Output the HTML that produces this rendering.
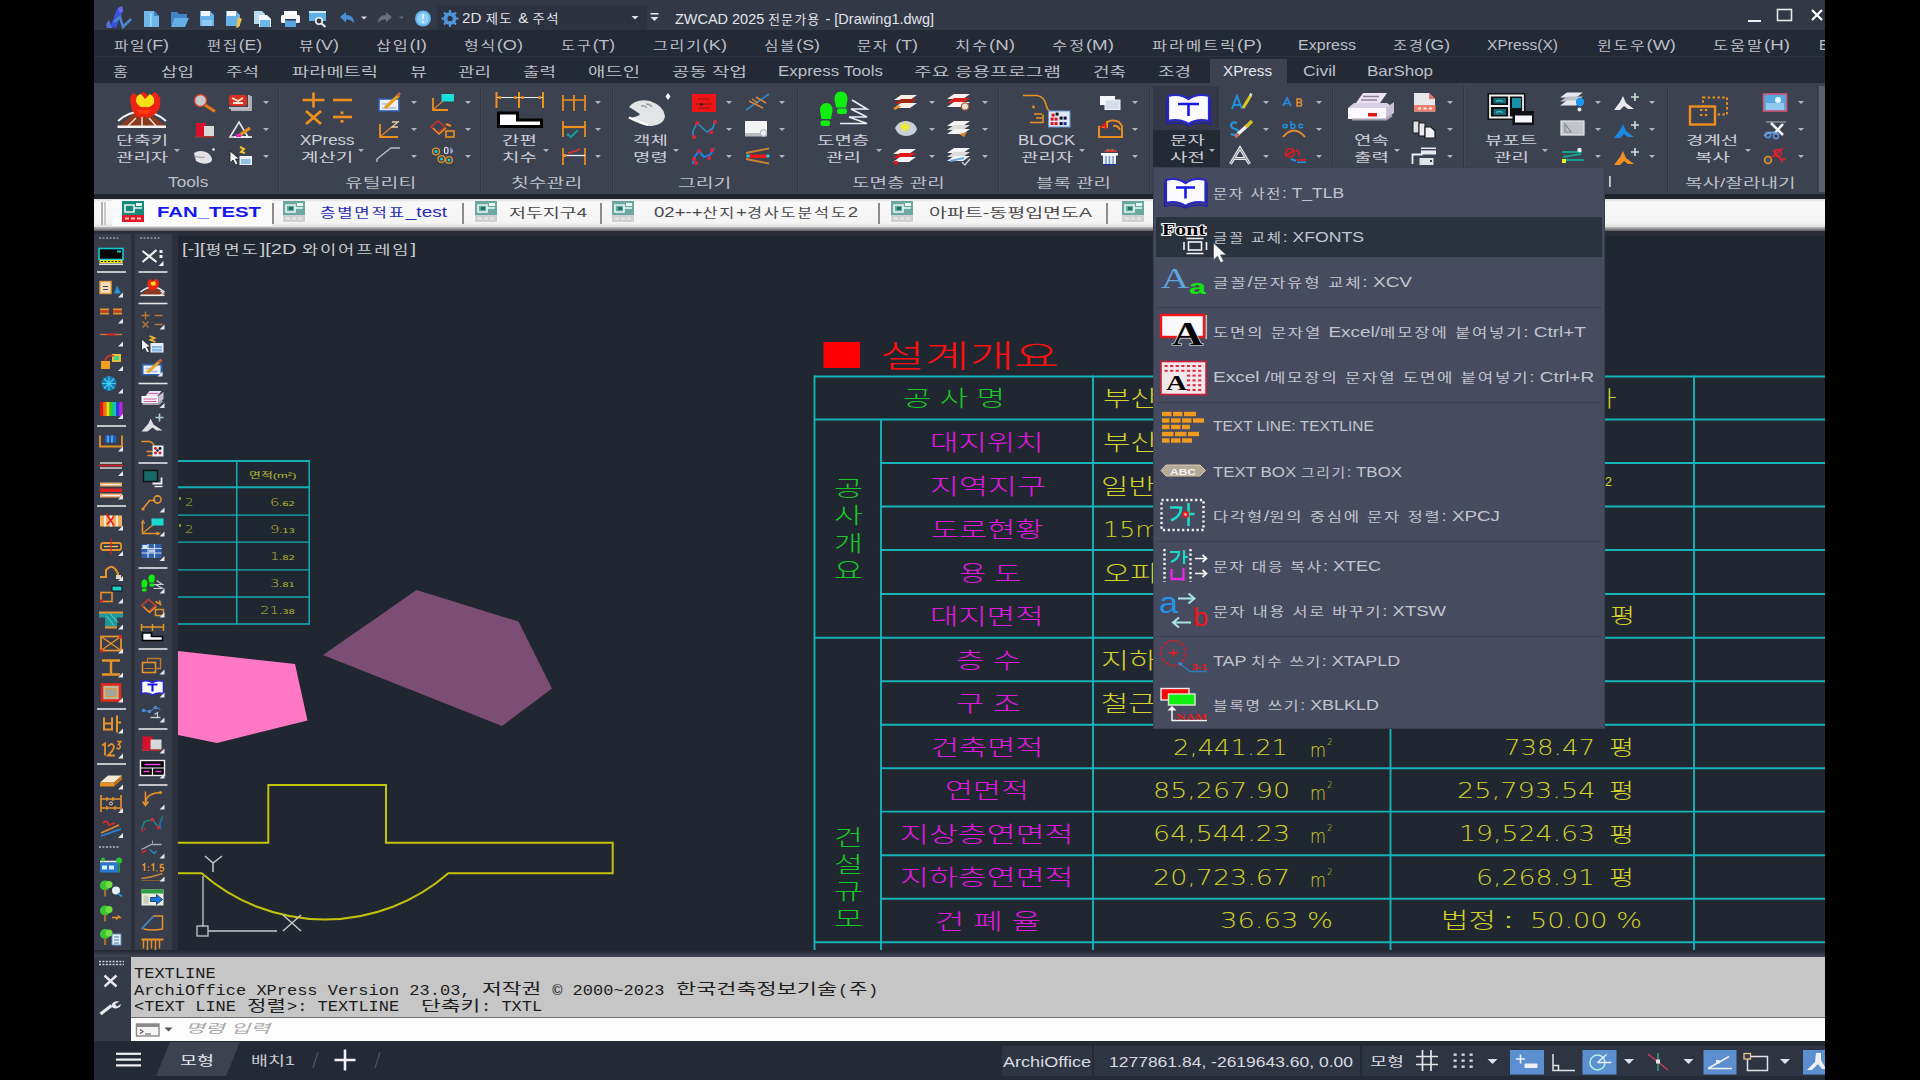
<!DOCTYPE html>
<html lang="ko"><head><meta charset="utf-8"><title>ZWCAD 2025 - Drawing1.dwg</title>
<style>
html,body{margin:0;padding:0;background:#000;}
body{width:1920px;height:1080px;position:relative;overflow:hidden;font-family:"Liberation Sans","Noto Sans CJK KR",sans-serif;}
.b{position:absolute;display:block;}
.t{position:absolute;white-space:pre;transform-origin:0 50%;}
.m{font-family:"Liberation Mono","Noto Sans CJK KR",monospace;}
.n{font-family:"DejaVu Sans","Liberation Sans","Noto Sans CJK KR",sans-serif;}
.s{font-family:"Liberation Serif","Noto Serif CJK SC",serif;}
</style></head>
<body>
<!-- top -->
<div id="top">
<div class="b" style="left:94px;top:0px;width:1731px;height:30px;background:#333846;"></div>
<div class="b" style="left:94px;top:30px;width:1731px;height:53px;background:#232935;"></div>
<div class="b" style="left:94px;top:56px;width:1731px;height:1px;background:#2e3340;"></div>
<div class="b" style="left:437px;top:5px;width:210px;height:25px;background:#2d3140;"></div>
<div class="t" style="left:462.0px;top:8.7px;line-height:19px;font-size:14.31px;color:#e0e2e8;transform:scaleX(1.062);">2D <span style="font-size:88%;letter-spacing:1.35px">제도 </span>&amp; <span style="font-size:88%;letter-spacing:1.35px">주석</span></div>
<div class="t" style="left:675.0px;top:9.7px;line-height:19px;font-size:14.31px;color:#e2e4ea;transform:scaleX(1.012);">ZWCAD 2025 <span style="font-size:88%;letter-spacing:1.35px">전문가용 </span>- [Drawing1.dwg]</div>
<div class="t" style="left:114.0px;top:36.0px;line-height:19px;font-size:14.31px;color:#bcbfc8;transform:scaleX(1.247);"><span style="font-size:88%;letter-spacing:1.35px">파일</span>(F)</div>
<div class="t" style="left:207.0px;top:36.0px;line-height:19px;font-size:14.31px;color:#bcbfc8;transform:scaleX(1.225);"><span style="font-size:88%;letter-spacing:1.35px">편집</span>(E)</div>
<div class="t" style="left:299.0px;top:36.0px;line-height:19px;font-size:14.31px;color:#bcbfc8;transform:scaleX(1.251);"><span style="font-size:88%;letter-spacing:1.35px">뷰</span>(V)</div>
<div class="t" style="left:376.0px;top:36.0px;line-height:19px;font-size:14.31px;color:#bcbfc8;transform:scaleX(1.296);"><span style="font-size:88%;letter-spacing:1.35px">삽입</span>(I)</div>
<div class="t" style="left:464.0px;top:36.0px;line-height:19px;font-size:14.31px;color:#bcbfc8;transform:scaleX(1.269);"><span style="font-size:88%;letter-spacing:1.35px">형식</span>(O)</div>
<div class="t" style="left:561.0px;top:36.0px;line-height:19px;font-size:14.31px;color:#bcbfc8;transform:scaleX(1.224);"><span style="font-size:88%;letter-spacing:1.35px">도구</span>(T)</div>
<div class="t" style="left:653.0px;top:36.0px;line-height:19px;font-size:14.31px;color:#bcbfc8;transform:scaleX(1.280);"><span style="font-size:88%;letter-spacing:1.35px">그리기</span>(K)</div>
<div class="t" style="left:764.0px;top:36.0px;line-height:19px;font-size:14.31px;color:#bcbfc8;transform:scaleX(1.247);"><span style="font-size:88%;letter-spacing:1.35px">심볼</span>(S)</div>
<div class="t" style="left:857.0px;top:36.0px;line-height:19px;font-size:14.31px;color:#bcbfc8;transform:scaleX(1.246);"><span style="font-size:88%;letter-spacing:1.35px">문자 </span>(T)</div>
<div class="t" style="left:955.0px;top:36.0px;line-height:19px;font-size:14.31px;color:#bcbfc8;transform:scaleX(1.313);"><span style="font-size:88%;letter-spacing:1.35px">치수</span>(N)</div>
<div class="t" style="left:1052.0px;top:36.0px;line-height:19px;font-size:14.31px;color:#bcbfc8;transform:scaleX(1.311);"><span style="font-size:88%;letter-spacing:1.35px">수정</span>(M)</div>
<div class="t" style="left:1152.0px;top:36.0px;line-height:19px;font-size:14.31px;color:#bcbfc8;transform:scaleX(1.315);"><span style="font-size:88%;letter-spacing:1.35px">파라메트릭</span>(P)</div>
<div class="t" style="left:1298.0px;top:35.5px;line-height:19px;font-size:14.31px;color:#bcbfc8;transform:scaleX(1.123);">Express</div>
<div class="t" style="left:1393.0px;top:36.0px;line-height:19px;font-size:14.31px;color:#bcbfc8;transform:scaleX(1.226);"><span style="font-size:88%;letter-spacing:1.35px">조경</span>(G)</div>
<div class="t" style="left:1487.0px;top:35.5px;line-height:19px;font-size:14.31px;color:#bcbfc8;transform:scaleX(1.090);">XPress(X)</div>
<div class="t" style="left:1597.0px;top:36.0px;line-height:19px;font-size:14.31px;color:#bcbfc8;transform:scaleX(1.278);"><span style="font-size:88%;letter-spacing:1.35px">윈도우</span>(W)</div>
<div class="t" style="left:1713.0px;top:36.0px;line-height:19px;font-size:14.31px;color:#bcbfc8;transform:scaleX(1.313);"><span style="font-size:88%;letter-spacing:1.35px">도움말</span>(H)</div>
<div class="b" style="left:1817px;top:32px;width:8px;height:24px;overflow:hidden"><div class="t" style="left:2.0px;top:3.5px;line-height:19px;font-size:14.31px;color:#bcbfc8;transform:scaleX(1.047);">E</div>
</div>
<div class="b" style="left:1210px;top:59px;width:77px;height:25px;background:#3d4251;"></div>
<div class="t" style="left:113.0px;top:64.4px;line-height:16px;font-size:12.56px;color:#bcbfc8;transform:scaleX(1.299);">홈</div>
<div class="t" style="left:161.0px;top:64.4px;line-height:16px;font-size:12.56px;color:#bcbfc8;transform:scaleX(1.429);">삽입</div>
<div class="t" style="left:226.0px;top:64.4px;line-height:16px;font-size:12.56px;color:#bcbfc8;transform:scaleX(1.429);">주석</div>
<div class="t" style="left:292.0px;top:64.4px;line-height:16px;font-size:12.56px;color:#bcbfc8;transform:scaleX(1.490);">파라메트릭</div>
<div class="t" style="left:410.0px;top:64.4px;line-height:16px;font-size:12.56px;color:#bcbfc8;transform:scaleX(1.472);">뷰</div>
<div class="t" style="left:458.0px;top:64.4px;line-height:16px;font-size:12.56px;color:#bcbfc8;transform:scaleX(1.429);">관리</div>
<div class="t" style="left:523.0px;top:64.4px;line-height:16px;font-size:12.56px;color:#bcbfc8;transform:scaleX(1.429);">출력</div>
<div class="t" style="left:588.0px;top:64.4px;line-height:16px;font-size:12.56px;color:#bcbfc8;transform:scaleX(1.501);">애드인</div>
<div class="t" style="left:672.0px;top:64.4px;line-height:16px;font-size:12.56px;color:#bcbfc8;transform:scaleX(1.510);">공동 작업</div>
<div class="t" style="left:778.0px;top:62.0px;line-height:19px;font-size:14.31px;color:#bcbfc8;transform:scaleX(1.183);">Express Tools</div>
<div class="t" style="left:914.0px;top:64.4px;line-height:16px;font-size:12.56px;color:#bcbfc8;transform:scaleX(1.534);">주요 응용프로그램</div>
<div class="t" style="left:1093.0px;top:64.4px;line-height:16px;font-size:12.56px;color:#bcbfc8;transform:scaleX(1.429);">건축</div>
<div class="t" style="left:1158.0px;top:64.4px;line-height:16px;font-size:12.56px;color:#bcbfc8;transform:scaleX(1.429);">조경</div>
<div class="t" style="left:1223.0px;top:62.0px;line-height:19px;font-size:14.31px;color:#e6e8ee;transform:scaleX(1.063);">XPress</div>
<div class="t" style="left:1303.0px;top:62.0px;line-height:19px;font-size:14.31px;color:#bcbfc8;transform:scaleX(1.222);">Civil</div>
<div class="t" style="left:1367.0px;top:62.0px;line-height:19px;font-size:14.31px;color:#bcbfc8;transform:scaleX(1.186);">BarShop</div>
<svg class="b" style="left:94px;top:0px" width="1731" height="30" viewBox="94 0 1731 30"><path d="M110 27 L117 9 L121 7 L123 11 L116 28 Z" fill="#3b52d8" /><path d="M118 8 l4 -2 l1.5 5 l-4 2 z" fill="#6a6af0" /><path d="M106 24 l3 -4 l3 8 l-5 0 z" fill="#5570e0" /><path d="M114 22 L120 17 L123 27 L131 19" fill="none" stroke="#4a86c8" stroke-width="2.6" /><path d="M144 11 h10 l5 5 v11 h-15 z" fill="#6db7ea" /><path d="M154 11 l5 5 h-5 z" fill="#3d83c4" /><rect x="150" y="13" width="1.5" height="14" fill="#a8d8f8" /><path d="M171 12 h6 l2 2 h8 v4 h-13 l-3 8 z" fill="#3f86c8" /><path d="M174 18 h15 l-4 9 h-14 z" fill="#62aee6" /><path d="M200 11 h10 l4 4 v11 h-14 z" fill="#66b2e8" /><rect x="201" y="11" width="9" height="5" fill="#f2f6fa" /><rect x="202" y="20" width="10" height="6" fill="#8ccaf0" /><path d="M226 11 h10 l4 4 v11 h-14 z" fill="#66b2e8" /><rect x="227" y="11" width="9" height="5" fill="#f2f6fa" /><path d="M238 17 l4 2 l-3 8 l-3 1 z" fill="#e8c24a" /><path d="M254 11 h8 l3 3 v10 h-11 z" fill="#b9d9f0" /><path d="M259 15 h8 l4 4 v8 h-12 z" fill="#f0f6fb" /><rect x="260" y="20" width="10" height="7" fill="#6db7ea" /><rect x="284" y="11" width="13" height="5" fill="#ffffff" /><rect x="281" y="15" width="19" height="8" fill="#f4f4f4" rx="1.5"/><rect x="285" y="20" width="11" height="7" fill="#58a6e0" /><rect x="285" y="19" width="11" height="1.5" fill="#333846" /><rect x="309" y="11" width="17" height="10" fill="#5fb0e6" /><rect x="309" y="11" width="17" height="2" fill="#cfe6f6" /><circle cx="319" cy="21" r="3.2" fill="#333846" stroke="#f0f0f0" stroke-width="1.6"/><path d="M321.5 23.5 l4 3.5" fill="none" stroke="#f0f0f0" stroke-width="2" /><path d="M340 17 l6 -5 v3 q8 0 8 8 q-3 -4 -8 -3.5 v3 z" fill="#4a8fd6" /><path d="M361 16.5 h6 l-3 3 z" fill="#d8dae0"/><path d="M392 17 l-6 -5 v3 q-8 0 -8 8 q3 -4 8 -3.5 v3 z" fill="#6a6f7c" /><path d="M399.0 16.5 h5.0 l-2.5 2.5 z" fill="#6a6f7c"/><circle cx="423" cy="18.5" r="8" fill="#62b4ea"/><circle cx="423" cy="18.5" r="6" fill="#8fd0f6"/><rect x="422.3" y="14" width="1.6" height="5" fill="#e8f6ff" /><rect x="422.3" y="21" width="1.6" height="1.8" fill="#e8f6ff" /><circle cx="450" cy="18.5" r="5" fill="none" stroke="#4f96dc" stroke-width="3"/><path d="M450 10 v17 M441.5 18.5 h17 M444 12.5 l12 12 M456 12.5 l-12 12" fill="none" stroke="#4f96dc" stroke-width="2.2" /><circle cx="450" cy="18.5" r="2.6" fill="#2d3140"/><path d="M631.5 16 h7.0 l-3.5 3.5 z" fill="#e0e2e8"/><rect x="650.5" y="13" width="8" height="1.6" fill="#e0e2e8" /><path d="M650.5 17 h8 l-4 4 z" fill="#e0e2e8"/><rect x="1748" y="20" width="13" height="2" fill="#f0f0f0" /><rect x="1777.5" y="9.5" width="14" height="11" fill="none" stroke="#e8e8e8" stroke-width="1.6"/><path d="M1812 10 l10 10 M1822 10 l-10 10" fill="none" stroke="#ffffff" stroke-width="2.2" /></svg>
</div>
<!-- ribbon -->
<div id="ribbon">
<div class="b" style="left:94px;top:83px;width:1731px;height:111px;background:#3d4251;"></div>
<div class="b" style="left:94px;top:194px;width:1731px;height:5px;background:#1f242e;"></div>
<div class="b" style="left:278px;top:86px;width:1px;height:106px;background:#333745;"></div>
<div class="b" style="left:279px;top:86px;width:1px;height:106px;background:#454a5a;"></div>
<div class="b" style="left:480px;top:86px;width:1px;height:106px;background:#333745;"></div>
<div class="b" style="left:481px;top:86px;width:1px;height:106px;background:#454a5a;"></div>
<div class="b" style="left:612px;top:86px;width:1px;height:106px;background:#333745;"></div>
<div class="b" style="left:613px;top:86px;width:1px;height:106px;background:#454a5a;"></div>
<div class="b" style="left:797px;top:86px;width:1px;height:106px;background:#333745;"></div>
<div class="b" style="left:798px;top:86px;width:1px;height:106px;background:#454a5a;"></div>
<div class="b" style="left:998px;top:86px;width:1px;height:106px;background:#333745;"></div>
<div class="b" style="left:999px;top:86px;width:1px;height:106px;background:#454a5a;"></div>
<div class="b" style="left:1149px;top:86px;width:1px;height:106px;background:#333745;"></div>
<div class="b" style="left:1150px;top:86px;width:1px;height:106px;background:#454a5a;"></div>
<div class="b" style="left:1332px;top:86px;width:1px;height:106px;background:#333745;"></div>
<div class="b" style="left:1333px;top:86px;width:1px;height:106px;background:#454a5a;"></div>
<div class="b" style="left:1463px;top:86px;width:1px;height:106px;background:#333745;"></div>
<div class="b" style="left:1464px;top:86px;width:1px;height:106px;background:#454a5a;"></div>
<div class="b" style="left:1667px;top:86px;width:1px;height:106px;background:#333745;"></div>
<div class="b" style="left:1668px;top:86px;width:1px;height:106px;background:#454a5a;"></div>
<div class="b" style="left:1817px;top:86px;width:1px;height:106px;background:#333745;"></div>
<div class="b" style="left:1818px;top:86px;width:1px;height:106px;background:#454a5a;"></div>
<div class="b" style="left:1819px;top:86px;width:6px;height:106px;background:#5a5f6e;"></div>
<div class="b" style="left:1153px;top:86px;width:66px;height:44px;background:#353947;"></div>
<div class="b" style="left:1152.5px;top:130px;width:67.5px;height:38.5px;background:#242a33;"></div>
<div class="t" style="left:115.9px;top:132.9px;line-height:16px;font-size:12.28px;color:#cdd0d8;transform:scaleX(1.541);">단축키</div>
<div class="t" style="left:115.9px;top:149.6px;line-height:16px;font-size:12.28px;color:#cdd0d8;transform:scaleX(1.541);">관리자</div>
<div class="b" style="left:173.5px;top:148.5px;width:0;height:0;border-left:3px solid transparent;border-right:3px solid transparent;border-top:3px solid #b0b3bc"></div>
<div class="t" style="left:299.8px;top:131.0px;line-height:18px;font-size:13.99px;color:#cdd0d8;transform:scaleX(1.207);">XPress</div>
<div class="t" style="left:300.9px;top:149.6px;line-height:16px;font-size:12.28px;color:#cdd0d8;transform:scaleX(1.541);">계산기</div>
<div class="b" style="left:358px;top:148.5px;width:0;height:0;border-left:3px solid transparent;border-right:3px solid transparent;border-top:3px solid #b0b3bc"></div>
<div class="t" style="left:501.6px;top:132.9px;line-height:16px;font-size:12.28px;color:#cdd0d8;transform:scaleX(1.541);">간편</div>
<div class="t" style="left:501.6px;top:149.6px;line-height:16px;font-size:12.28px;color:#cdd0d8;transform:scaleX(1.541);">치수</div>
<div class="b" style="left:542.5px;top:148.5px;width:0;height:0;border-left:3px solid transparent;border-right:3px solid transparent;border-top:3px solid #b0b3bc"></div>
<div class="t" style="left:632.6px;top:132.9px;line-height:16px;font-size:12.28px;color:#cdd0d8;transform:scaleX(1.541);">객체</div>
<div class="t" style="left:632.6px;top:149.6px;line-height:16px;font-size:12.28px;color:#cdd0d8;transform:scaleX(1.541);">명령</div>
<div class="b" style="left:672.5px;top:148.5px;width:0;height:0;border-left:3px solid transparent;border-right:3px solid transparent;border-top:3px solid #b0b3bc"></div>
<div class="t" style="left:816.9px;top:132.9px;line-height:16px;font-size:12.28px;color:#cdd0d8;transform:scaleX(1.541);">도면층</div>
<div class="t" style="left:825.6px;top:149.6px;line-height:16px;font-size:12.28px;color:#cdd0d8;transform:scaleX(1.541);">관리</div>
<div class="b" style="left:875.5px;top:148.5px;width:0;height:0;border-left:3px solid transparent;border-right:3px solid transparent;border-top:3px solid #b0b3bc"></div>
<div class="t" style="left:1018.4px;top:131.0px;line-height:18px;font-size:13.99px;color:#cdd0d8;transform:scaleX(1.207);">BLOCK</div>
<div class="t" style="left:1020.9px;top:149.6px;line-height:16px;font-size:12.28px;color:#cdd0d8;transform:scaleX(1.541);">관리자</div>
<div class="b" style="left:1079px;top:148.5px;width:0;height:0;border-left:3px solid transparent;border-right:3px solid transparent;border-top:3px solid #b0b3bc"></div>
<div class="t" style="left:1169.6px;top:132.9px;line-height:16px;font-size:12.28px;color:#cdd0d8;transform:scaleX(1.541);">문자</div>
<div class="t" style="left:1169.6px;top:149.6px;line-height:16px;font-size:12.28px;color:#cdd0d8;transform:scaleX(1.541);">사전</div>
<div class="b" style="left:1209px;top:148.5px;width:0;height:0;border-left:3px solid transparent;border-right:3px solid transparent;border-top:3px solid #b0b3bc"></div>
<div class="t" style="left:1353.6px;top:132.9px;line-height:16px;font-size:12.28px;color:#cdd0d8;transform:scaleX(1.541);">연속</div>
<div class="t" style="left:1353.6px;top:149.6px;line-height:16px;font-size:12.28px;color:#cdd0d8;transform:scaleX(1.541);">출력</div>
<div class="b" style="left:1394px;top:148.5px;width:0;height:0;border-left:3px solid transparent;border-right:3px solid transparent;border-top:3px solid #b0b3bc"></div>
<div class="t" style="left:1484.9px;top:132.9px;line-height:16px;font-size:12.28px;color:#cdd0d8;transform:scaleX(1.541);">뷰포트</div>
<div class="t" style="left:1493.6px;top:149.6px;line-height:16px;font-size:12.28px;color:#cdd0d8;transform:scaleX(1.541);">관리</div>
<div class="b" style="left:1542px;top:148.5px;width:0;height:0;border-left:3px solid transparent;border-right:3px solid transparent;border-top:3px solid #b0b3bc"></div>
<div class="t" style="left:1685.9px;top:132.9px;line-height:16px;font-size:12.28px;color:#cdd0d8;transform:scaleX(1.541);">경계선</div>
<div class="t" style="left:1694.6px;top:149.6px;line-height:16px;font-size:12.28px;color:#cdd0d8;transform:scaleX(1.541);">복사</div>
<div class="b" style="left:1744.5px;top:148.5px;width:0;height:0;border-left:3px solid transparent;border-right:3px solid transparent;border-top:3px solid #b0b3bc"></div>
<div class="t" style="left:167.8px;top:172.5px;line-height:19px;font-size:14.31px;color:#bcc0c8;transform:scaleX(1.209);">Tools</div>
<div class="t" style="left:345.4px;top:174.9px;line-height:16px;font-size:12.56px;color:#bcc0c8;transform:scaleX(1.542);">유틸리티</div>
<div class="t" style="left:511.4px;top:174.9px;line-height:16px;font-size:12.56px;color:#bcc0c8;transform:scaleX(1.542);">칫수관리</div>
<div class="t" style="left:678.3px;top:174.9px;line-height:16px;font-size:12.56px;color:#bcc0c8;transform:scaleX(1.542);">그리기</div>
<div class="t" style="left:851.6px;top:174.9px;line-height:16px;font-size:12.56px;color:#bcc0c8;transform:scaleX(1.515);">도면층 관리</div>
<div class="t" style="left:1035.5px;top:174.9px;line-height:16px;font-size:12.56px;color:#bcc0c8;transform:scaleX(1.509);">블록 관리</div>
<div class="t" style="left:1684.7px;top:174.9px;line-height:16px;font-size:12.56px;color:#bcc0c8;transform:scaleX(1.519);">복사/잘라내기</div>
<div class="b" style="left:262.5px;top:100.5px;width:0;height:0;border-left:3.5px solid transparent;border-right:3.5px solid transparent;border-top:3.5px solid #b4b7c0"></div>
<div class="b" style="left:262.5px;top:127.5px;width:0;height:0;border-left:3.5px solid transparent;border-right:3.5px solid transparent;border-top:3.5px solid #b4b7c0"></div>
<div class="b" style="left:262.5px;top:154.5px;width:0;height:0;border-left:3.5px solid transparent;border-right:3.5px solid transparent;border-top:3.5px solid #b4b7c0"></div>
<div class="b" style="left:410.5px;top:100.5px;width:0;height:0;border-left:3.5px solid transparent;border-right:3.5px solid transparent;border-top:3.5px solid #b4b7c0"></div>
<div class="b" style="left:410.5px;top:127.5px;width:0;height:0;border-left:3.5px solid transparent;border-right:3.5px solid transparent;border-top:3.5px solid #b4b7c0"></div>
<div class="b" style="left:410.5px;top:154.5px;width:0;height:0;border-left:3.5px solid transparent;border-right:3.5px solid transparent;border-top:3.5px solid #b4b7c0"></div>
<div class="b" style="left:464.5px;top:100.5px;width:0;height:0;border-left:3.5px solid transparent;border-right:3.5px solid transparent;border-top:3.5px solid #b4b7c0"></div>
<div class="b" style="left:464.5px;top:127.5px;width:0;height:0;border-left:3.5px solid transparent;border-right:3.5px solid transparent;border-top:3.5px solid #b4b7c0"></div>
<div class="b" style="left:464.5px;top:154.5px;width:0;height:0;border-left:3.5px solid transparent;border-right:3.5px solid transparent;border-top:3.5px solid #b4b7c0"></div>
<div class="b" style="left:594.5px;top:100.5px;width:0;height:0;border-left:3.5px solid transparent;border-right:3.5px solid transparent;border-top:3.5px solid #b4b7c0"></div>
<div class="b" style="left:594.5px;top:127.5px;width:0;height:0;border-left:3.5px solid transparent;border-right:3.5px solid transparent;border-top:3.5px solid #b4b7c0"></div>
<div class="b" style="left:594.5px;top:154.5px;width:0;height:0;border-left:3.5px solid transparent;border-right:3.5px solid transparent;border-top:3.5px solid #b4b7c0"></div>
<div class="b" style="left:725.5px;top:100.5px;width:0;height:0;border-left:3.5px solid transparent;border-right:3.5px solid transparent;border-top:3.5px solid #b4b7c0"></div>
<div class="b" style="left:725.5px;top:127.5px;width:0;height:0;border-left:3.5px solid transparent;border-right:3.5px solid transparent;border-top:3.5px solid #b4b7c0"></div>
<div class="b" style="left:725.5px;top:154.5px;width:0;height:0;border-left:3.5px solid transparent;border-right:3.5px solid transparent;border-top:3.5px solid #b4b7c0"></div>
<div class="b" style="left:778.5px;top:100.5px;width:0;height:0;border-left:3.5px solid transparent;border-right:3.5px solid transparent;border-top:3.5px solid #b4b7c0"></div>
<div class="b" style="left:778.5px;top:127.5px;width:0;height:0;border-left:3.5px solid transparent;border-right:3.5px solid transparent;border-top:3.5px solid #b4b7c0"></div>
<div class="b" style="left:778.5px;top:154.5px;width:0;height:0;border-left:3.5px solid transparent;border-right:3.5px solid transparent;border-top:3.5px solid #b4b7c0"></div>
<div class="b" style="left:928.5px;top:100.5px;width:0;height:0;border-left:3.5px solid transparent;border-right:3.5px solid transparent;border-top:3.5px solid #b4b7c0"></div>
<div class="b" style="left:928.5px;top:127.5px;width:0;height:0;border-left:3.5px solid transparent;border-right:3.5px solid transparent;border-top:3.5px solid #b4b7c0"></div>
<div class="b" style="left:928.5px;top:154.5px;width:0;height:0;border-left:3.5px solid transparent;border-right:3.5px solid transparent;border-top:3.5px solid #b4b7c0"></div>
<div class="b" style="left:981.5px;top:100.5px;width:0;height:0;border-left:3.5px solid transparent;border-right:3.5px solid transparent;border-top:3.5px solid #b4b7c0"></div>
<div class="b" style="left:981.5px;top:127.5px;width:0;height:0;border-left:3.5px solid transparent;border-right:3.5px solid transparent;border-top:3.5px solid #b4b7c0"></div>
<div class="b" style="left:981.5px;top:154.5px;width:0;height:0;border-left:3.5px solid transparent;border-right:3.5px solid transparent;border-top:3.5px solid #b4b7c0"></div>
<div class="b" style="left:1131.5px;top:100.5px;width:0;height:0;border-left:3.5px solid transparent;border-right:3.5px solid transparent;border-top:3.5px solid #b4b7c0"></div>
<div class="b" style="left:1131.5px;top:127.5px;width:0;height:0;border-left:3.5px solid transparent;border-right:3.5px solid transparent;border-top:3.5px solid #b4b7c0"></div>
<div class="b" style="left:1131.5px;top:154.5px;width:0;height:0;border-left:3.5px solid transparent;border-right:3.5px solid transparent;border-top:3.5px solid #b4b7c0"></div>
<div class="b" style="left:1262.5px;top:100.5px;width:0;height:0;border-left:3.5px solid transparent;border-right:3.5px solid transparent;border-top:3.5px solid #b4b7c0"></div>
<div class="b" style="left:1262.5px;top:127.5px;width:0;height:0;border-left:3.5px solid transparent;border-right:3.5px solid transparent;border-top:3.5px solid #b4b7c0"></div>
<div class="b" style="left:1262.5px;top:154.5px;width:0;height:0;border-left:3.5px solid transparent;border-right:3.5px solid transparent;border-top:3.5px solid #b4b7c0"></div>
<div class="b" style="left:1315.5px;top:100.5px;width:0;height:0;border-left:3.5px solid transparent;border-right:3.5px solid transparent;border-top:3.5px solid #b4b7c0"></div>
<div class="b" style="left:1315.5px;top:127.5px;width:0;height:0;border-left:3.5px solid transparent;border-right:3.5px solid transparent;border-top:3.5px solid #b4b7c0"></div>
<div class="b" style="left:1315.5px;top:154.5px;width:0;height:0;border-left:3.5px solid transparent;border-right:3.5px solid transparent;border-top:3.5px solid #b4b7c0"></div>
<div class="b" style="left:1446.5px;top:100.5px;width:0;height:0;border-left:3.5px solid transparent;border-right:3.5px solid transparent;border-top:3.5px solid #b4b7c0"></div>
<div class="b" style="left:1446.5px;top:127.5px;width:0;height:0;border-left:3.5px solid transparent;border-right:3.5px solid transparent;border-top:3.5px solid #b4b7c0"></div>
<div class="b" style="left:1446.5px;top:154.5px;width:0;height:0;border-left:3.5px solid transparent;border-right:3.5px solid transparent;border-top:3.5px solid #b4b7c0"></div>
<div class="b" style="left:1594.5px;top:100.5px;width:0;height:0;border-left:3.5px solid transparent;border-right:3.5px solid transparent;border-top:3.5px solid #b4b7c0"></div>
<div class="b" style="left:1594.5px;top:127.5px;width:0;height:0;border-left:3.5px solid transparent;border-right:3.5px solid transparent;border-top:3.5px solid #b4b7c0"></div>
<div class="b" style="left:1594.5px;top:154.5px;width:0;height:0;border-left:3.5px solid transparent;border-right:3.5px solid transparent;border-top:3.5px solid #b4b7c0"></div>
<div class="b" style="left:1648.5px;top:100.5px;width:0;height:0;border-left:3.5px solid transparent;border-right:3.5px solid transparent;border-top:3.5px solid #b4b7c0"></div>
<div class="b" style="left:1648.5px;top:127.5px;width:0;height:0;border-left:3.5px solid transparent;border-right:3.5px solid transparent;border-top:3.5px solid #b4b7c0"></div>
<div class="b" style="left:1648.5px;top:154.5px;width:0;height:0;border-left:3.5px solid transparent;border-right:3.5px solid transparent;border-top:3.5px solid #b4b7c0"></div>
<div class="b" style="left:1797.5px;top:100.5px;width:0;height:0;border-left:3.5px solid transparent;border-right:3.5px solid transparent;border-top:3.5px solid #b4b7c0"></div>
<div class="b" style="left:1797.5px;top:127.5px;width:0;height:0;border-left:3.5px solid transparent;border-right:3.5px solid transparent;border-top:3.5px solid #b4b7c0"></div>
<div class="b" style="left:1797.5px;top:154.5px;width:0;height:0;border-left:3.5px solid transparent;border-right:3.5px solid transparent;border-top:3.5px solid #b4b7c0"></div>
<svg class="b" style="left:94px;top:83px" width="1731" height="111" viewBox="94 83 1731 111"><path d="M118 127 L134 113 Q142 108 150 113 L166 127 Z" fill="#8c3a1e" /><path d="M118 121 Q128 112 142 111 Q156 112 166 121" fill="none" stroke="#f4f4f6" stroke-width="2" /><path d="M128 126 l8 -8 M142 126 v-9 M156 126 l-7 -8" fill="none" stroke="#e8d8d0" stroke-width="1.6" /><rect x="117.5" y="125.5" width="48.5" height="2.5" fill="#f4f4f6" /><path d="M131 104 Q128 96 134 93 L139 97 L143 91.5 L149 96 L155 92 Q162 96 160 106 Q158 114 150 117 L138 117 Q131 112 131 104 Z" fill="#ee2412" /><path d="M136 101 Q136 95 141 94 L145 99 L150 94 Q155 97 154 103 Q151 108 145 107 Q138 108 136 101 Z" fill="#f6e018" /><path d="M137 110 h14 l-3 4 h-8 z" fill="#ff3a10" /><path d="M205 105 L215 111.5" fill="none" stroke="#e87818" stroke-width="3" /><circle cx="200.5" cy="100.5" r="6" fill="#c8c8cc" stroke="#d04030" stroke-width="1.4"/><path d="M231 110 h20 v-14" fill="none" stroke="#d8d8dc" stroke-width="1.4" /><path d="M229 108 h20 v-13" fill="none" stroke="#e8e8ec" stroke-width="1.4" /><rect x="229" y="95" width="18" height="11" fill="#d83020" rx="3"/><path d="M232 98 l6 3 l5 -3 M233 103 h10" fill="none" stroke="#f8e8d8" stroke-width="1.8" /><rect x="196" y="123" width="10" height="13" fill="#d8102c" /><rect x="204" y="126" width="10" height="10" fill="#d8d8d8" /><rect x="195" y="136" width="19" height="1.5" fill="#b03030" /><path d="M230 137 L239 122 L248 137 Z" fill="none" stroke="#e8e8e8" stroke-width="1.6" /><path d="M234 137 h18" fill="none" stroke="#f4f4f4" stroke-width="1.6" /><path d="M240 135 L250 128" fill="none" stroke="#e89020" stroke-width="3" /><rect x="236" y="134" width="5" height="3" fill="#f020d0" /><path d="M194 153 Q200 149 208 153 Q214 158 211 162 Q204 166 196 161 Z" fill="#e4e4e6" /><path d="M194 156 Q200 158 205 157" fill="none" stroke="#9a9aa0" stroke-width="1.2" /><circle cx="213.5" cy="149.5" r="1.3" fill="#f4f4f6"/><path d="M230 151 l0 12 l3 -3 l2.5 5 l2.5 -1.5 l-2.5 -4.5 h4 z" fill="#f4f4f6" stroke="#202020" stroke-width="0.8" /><path d="M240 147 l4 2 l-3 3 l4 1" fill="none" stroke="#f0c020" stroke-width="2" /><rect x="239.5" y="156" width="12.5" height="9" fill="#e8eef8" /><rect x="241" y="159" width="9.5" height="5" fill="#90c0e8" /><path d="M302.5 100 h22 M313.5 92.5 v15" fill="none" stroke="#f0901c" stroke-width="2.6" /><path d="M333 100 h19" fill="none" stroke="#f0901c" stroke-width="2.6" /><path d="M306 111 l15 13 M321 111 l-15 13" fill="none" stroke="#f0901c" stroke-width="2.8" /><path d="M333 117 h19" fill="none" stroke="#f0901c" stroke-width="2.6" /><rect x="340.5" y="111.5" width="3" height="2.6" fill="#f0901c" /><rect x="340.5" y="120" width="3" height="2.6" fill="#f0901c" /><rect x="379" y="99" width="20" height="12" fill="#f0f0f4" stroke="#2c5cb0" stroke-width="1.6"/><path d="M382 108 h14 M382 104 h6" fill="none" stroke="#a8c0e0" stroke-width="1.6" /><path d="M385 108 L399 95" fill="none" stroke="#e8a020" stroke-width="3.2" /><path d="M397 96 l3 -3" fill="none" stroke="#c06040" stroke-width="3" /><path d="M380 124 v13 h18" fill="none" stroke="#f0901c" stroke-width="1.8" /><path d="M381 136 l12 -10" fill="none" stroke="#d88030" stroke-width="1.4" /><path d="M392 122 h6 l-6 5 h6" fill="none" stroke="#e8d0a0" stroke-width="1.3" /><path d="M377 162 v-3 L391 148 H400" fill="none" stroke="#b8bcc4" stroke-width="1.5" /><path d="M433 98 v12 h15" fill="none" stroke="#f0901c" stroke-width="1.8" /><path d="M434 109 l9 -8" fill="none" stroke="#d88030" stroke-width="1.4" /><rect x="441.5" y="94" width="12.5" height="7.5" fill="#18e0d8" /><path d="M431 127 l7 -6 l7 6 l-7 6 z" fill="none" stroke="#d03030" stroke-width="1.6" /><path d="M433 128 l6 6 l7 -6" fill="none" stroke="#f0901c" stroke-width="1.4" /><rect x="446" y="131" width="8" height="6" fill="none" stroke="#f0901c" stroke-width="1.6"/><path d="M446 124 l5 2" fill="none" stroke="#f0901c" stroke-width="2" /><circle cx="436" cy="151.5" r="3.4" fill="none" stroke="#d89030" stroke-width="1.4"/><circle cx="436" cy="151.5" r="1.5" fill="#18d0d0"/><circle cx="441.5" cy="159" r="3.4" fill="none" stroke="#d89030" stroke-width="1.4"/><circle cx="441.5" cy="159" r="1.5" fill="#18d0d0"/><circle cx="449" cy="160" r="3.4" fill="none" stroke="#d89030" stroke-width="1.4"/><circle cx="449" cy="160" r="1.5" fill="#18d0d0"/><rect x="444.5" y="147.5" width="3.5" height="6" fill="none" stroke="#e8e8f8" stroke-width="1.2" rx="1.5"/><path d="M451 153.5 v-6 M451 153 q3 -3 0 -3.5" fill="none" stroke="#a0a8f0" stroke-width="1.2" /><path d="M496.5 92 v16 M519 92 v16 M543 92 v16" fill="none" stroke="#f0901c" stroke-width="2" /><path d="M497 97.5 h46" fill="none" stroke="#f0f0f0" stroke-width="1.2" /><circle cx="500" cy="97.5" r="1.6" fill="#f0901c"/><circle cx="515.5" cy="97.5" r="1.6" fill="#f0901c"/><circle cx="522.5" cy="97.5" r="1.6" fill="#f0901c"/><circle cx="539.5" cy="97.5" r="1.6" fill="#f0901c"/><path d="M498.5 113 h19 v7 h24 v6.5 h-43 z" fill="#fdfdff" stroke="#000000" stroke-width="3" /><path d="M563 95 v16 M574 95 v16 M585 95 v16 M563 100 h22" fill="none" stroke="#f0901c" stroke-width="1.7" /><path d="M563 121 v16 M585 121 v16" fill="none" stroke="#f0901c" stroke-width="1.7" /><path d="M563 127 h22" fill="none" stroke="#f0901c" stroke-width="2.2" /><path d="M567 134 l4 3 l7 -7" fill="none" stroke="#189890" stroke-width="2.2" /><path d="M563 148 v17 M585 148 v17" fill="none" stroke="#f0901c" stroke-width="1.7" /><path d="M563 155.5 h22" fill="none" stroke="#f0f0f0" stroke-width="1.3" /><circle cx="565" cy="155.5" r="1.6" fill="#f0901c"/><path d="M568 153 l8 -2 l4 -2" fill="none" stroke="#e03030" stroke-width="1.6" /><path d="M629 107 Q636 98 650 101 Q664 106 665 116 Q664 125 650 126 Q640 125 628 118 Q638 117 640 114 Q634 110 629 107 Z" fill="#e2e4e6" /><path d="M629 117.5 Q638 121 648 125" fill="none" stroke="#f8f8f8" stroke-width="2" /><path d="M641 106 q4 -1 6 2 M646 104 q4 0 6 3" fill="none" stroke="#9a9ca4" stroke-width="1.3" /><path d="M668 93 l2.5 3.5 l-2.5 3.5 l-2.5 -3.5 z" fill="#fafafa" /><rect x="692" y="94" width="24" height="18" fill="#f01414" /><path d="M695 104 h18 M698 99 h12 M698 108 h12" fill="none" stroke="#a81818" stroke-width="1.4" /><circle cx="701.5" cy="104.5" r="1.6" fill="#502020"/><path d="M693 137 v-6 l4 -8 l10 9 l6 -4 l2 -8" fill="none" stroke="#2890c0" stroke-width="1.6" /><rect x="692.4" y="135.4" width="3.4" height="3.4" fill="#e82030" /><rect x="695.4" y="121.4" width="3.4" height="3.4" fill="#e82030" /><rect x="709.4" y="130.4" width="3.4" height="3.4" fill="#e82030" /><rect x="713.4" y="120.4" width="3.4" height="3.4" fill="#e82030" /><path d="M693 164 l1 -6 l5 -7 l5 6 l6 -2 l4 -7" fill="none" stroke="#2080e0" stroke-width="2" /><rect x="692.4" y="157.4" width="3.4" height="3.4" fill="#e82030" /><rect x="697.4" y="149.4" width="3.4" height="3.4" fill="#e82030" /><rect x="707.4" y="156.4" width="3.4" height="3.4" fill="#e82030" /><rect x="710.4" y="148.4" width="3.4" height="3.4" fill="#e82030" /><rect x="694.4" y="161.4" width="3.4" height="3.4" fill="#e82030" /><path d="M746 110 L769 94" fill="none" stroke="#3088c8" stroke-width="1.6" /><path d="M749 101 l14 7 M756 97 l10 6 M752 99 l6 4" fill="none" stroke="#d08838" stroke-width="1.5" /><rect x="745" y="121" width="22" height="13" fill="#f4f4f4" /><rect x="745" y="133" width="22" height="3.5" fill="#b8bcc0" /><circle cx="763.5" cy="133" r="3.4" fill="#e8ecf0" stroke="#a0a4a8" stroke-width="0.8"/><path d="M746 153 L769 148.5 M746 159 L769 163.5" fill="none" stroke="#d08030" stroke-width="1.8" /><rect x="749" y="154.5" width="18" height="3.4" fill="#f01818" /><circle cx="748" cy="156" r="1.8" fill="#20c8e8"/><circle cx="768" cy="156" r="1.8" fill="#20c8e8"/><path d="M820 111 q0 -8 6.5 -8 q6 0 6 8 l-1.5 8 h-9.5 z" fill="#10f010" /><rect x="820.5" y="120.5" width="9.5" height="5.5" fill="#10f010" rx="2"/><path d="M834.5 99 q0 -7.5 6.5 -7.5 q6.5 0 6.5 8 l-1.5 8 h-10 z" fill="#10f010" /><rect x="837" y="108.5" width="10" height="5.5" fill="#10f010" rx="2"/><path d="M852 100 L867 109 H851 L867 117 H849 L867 123.5 H840" fill="none" stroke="#eceef2" stroke-width="1.6" /><path d="M894 100 l7 -5 h16 l-7 5 z" fill="#f8f0e8" /><path d="M894 104 l7 -5 h16 l-7 5 z" fill="#a02810" /><path d="M894 108 l7 -5 h16 l-7 5 z" fill="#f8f0e8" /><path d="M894 109 l6 -3" fill="none" stroke="#f0901c" stroke-width="2.5" /><path d="M895 128 q4 -8 12 -7 q8 1 10 8 q-2 7 -11 7 q-8 0 -11 -8 z" fill="#c8d0d8" /><path d="M900 127 h10 M905 122 v9 M901 123.5 l8 7 M909 123.5 l-8 7" fill="none" stroke="#f0f020" stroke-width="1.5" /><path d="M893 154 l7 -5 h16 l-7 5 z" fill="#f4f4f4" /><path d="M893 158 l7 -5 h16 l-7 5 z" fill="#e01818" /><path d="M893 162 l7 -5 h16 l-7 5 z" fill="#f4f4f4" /><rect x="894" y="161" width="4" height="3.5" fill="#e01818" /><path d="M947 99 l7 -5 h16 l-7 5 z" fill="#f8f0f0" /><path d="M947 103 l7 -5 h16 l-7 5 z" fill="#d82020" /><path d="M947 107 l7 -5 h16 l-7 5 z" fill="#f8f0f0" /><circle cx="965" cy="106.5" r="3.6" fill="#e8e0d8" stroke="#b06030" stroke-width="1.2"/><path d="M947 126 l7 -5 h16 l-7 5 z" fill="#f4f4f4" /><path d="M947 130 l7 -5 h16 l-7 5 z" fill="#dcdcdc" /><path d="M947 134 l7 -5 h16 l-7 5 z" fill="#f4f4f4" /><path d="M959 134 l8 -2 l-3 5 z" fill="#e08828" /><path d="M947 153 l7 -5 h16 l-7 5 z" fill="#f4f4f4" /><path d="M947 157 l7 -5 h16 l-7 5 z" fill="#dcdcdc" /><path d="M947 161 l7 -5 h16 l-7 5 z" fill="#f4f4f4" /><path d="M950 161 l14 -3" fill="none" stroke="#70a8e0" stroke-width="2" /><path d="M962 162 l3 3 l5 -6" fill="none" stroke="#c8d0d8" stroke-width="1.5" /><path d="M1023 95.5 h14 q7 1 9 9 q1 5 4 7 M1034 114 h8 M1036 118 h7 M1030 122.5 h13 v-8" fill="none" stroke="#e89420" stroke-width="1.5" /><circle cx="1033.5" cy="107" r="1.4" fill="#e89420"/><rect x="1048.5" y="111" width="21.5" height="16" fill="#dce8f8" stroke="#6898d0" stroke-width="1"/><rect x="1051.6" y="113.6" width="3" height="3" fill="#e01020" /><rect x="1055.6" y="112.6" width="3" height="3" fill="#101010" /><rect x="1050.6" y="117.6" width="3" height="3" fill="#e01020" /><rect x="1054.6" y="117.6" width="3" height="3" fill="#e01020" /><rect x="1059.6" y="116.6" width="3" height="3" fill="#101010" /><rect x="1063.6" y="116.6" width="3" height="3" fill="#101040" /><rect x="1050.6" y="122.1" width="3" height="3" fill="#e01020" /><rect x="1054.6" y="122.1" width="3" height="3" fill="#e01020" /><rect x="1059.6" y="122.1" width="3" height="3" fill="#101010" /><rect x="1063.6" y="122.1" width="3" height="3" fill="#2020c0" /><rect x="1100" y="96" width="15" height="9" fill="#f4f6fa" /><rect x="1105" y="100" width="15" height="9.5" fill="#d4dcec" stroke="#f4f6fa" stroke-width="1"/><path d="M1099 127 h8 v-5 q6 -3 12 0 l3 4 v11 h-23 z" fill="none" stroke="#e88c20" stroke-width="2" /><path d="M1113 126 q5 -1 7 4" fill="none" stroke="#e88c20" stroke-width="2" /><path d="M1100 128 l5 -4 l1 5" fill="none" stroke="#e01818" stroke-width="2.2" /><rect x="1103" y="155" width="13" height="9.5" fill="#e8eef8" /><path d="M1106 156 v8 M1109.5 156 v8 M1113 156 v8" fill="none" stroke="#7098d0" stroke-width="1.4" /><rect x="1101" y="153" width="17" height="2.5" fill="#f8f8f8" /><path d="M1104 152 q2 -4 5 -2 q3 -3 5 0 q3 -1 3 2 z" fill="#e03040" /><path d="M1107 151 l2 -2 M1112 151 l1 -2" fill="none" stroke="#20c040" stroke-width="1.2" /><rect x="1103" y="164" width="13" height="1.2" fill="#2030a0" /><path d="M1168 96 Q1180 93 1188.5 99 Q1197 93 1209 96 V121 Q1197 118.5 1188.5 124 Q1180 118.5 1168 121 Z" fill="#fbfbff" stroke="#2828c8" stroke-width="2.2" /><path d="M1166.5 98.5 V124 Q1180 121.5 1188.5 126 Q1197 121.5 1210.5 124 V98.5" fill="none" stroke="#2020a8" stroke-width="1.3" /><path d="M1178 104 h21 M1188.5 104 v12" fill="none" stroke="#1818e8" stroke-width="2.6" /><path d="M1232 109 l5 -13 l5 13 M1234 105 h6" fill="none" stroke="#2090e0" stroke-width="2" /><path d="M1243 108 l8 -13" fill="none" stroke="#d8c828" stroke-width="3" /><path d="M1250 96 l1.5 -2.5" fill="none" stroke="#d0d0d8" stroke-width="2.5" /><path d="M1237 123 q-5 -2 -6 2 q0 3 4 4 q4 1 3 4 q-2 3 -7 1" fill="none" stroke="#2098e0" stroke-width="2.2" /><path d="M1238 134 L1248 125" fill="none" stroke="#f0f0f0" stroke-width="3.4" /><path d="M1246 127 L1252 121" fill="none" stroke="#d8c020" stroke-width="3.4" /><path d="M1235 137 l4 -3" fill="none" stroke="#d07060" stroke-width="3" /><path d="M1230.5 164 L1240 148 L1249.5 164 M1234.5 158.5 h11" fill="none" stroke="#e8e8ec" stroke-width="3" /><path d="M1230.5 164 L1240 148 L1249.5 164 M1234.5 158.5 h11" fill="none" stroke="#70747c" stroke-width="0.8" /><path d="M1283 106 l4 -8 l4 8 M1284.5 103.5 h5" fill="none" stroke="#2888d8" stroke-width="1.7" /><path d="M1297 99 v7 h3.5 q2.5 -1 0 -3.5 q2 -2 0 -3.5 z M1297 102.5 h4" fill="none" stroke="#e09030" stroke-width="1.5" /><path d="M1283 137 Q1294 124 1305 137" fill="none" stroke="#e09030" stroke-width="1.8" /><path d="M1287 126 q-3 -3 -4 0 q0 3 4 1 v-3 v4 M1291 121 v7 q4 1 4 -2 q0 -3 -4 -1 M1303 125 q-4 -2 -4 1 q0 3 4 1" fill="none" stroke="#2090d8" stroke-width="1.5" /><circle cx="1290" cy="153" r="4.2" fill="none" stroke="#e01818" stroke-width="1.6"/><path d="M1285 156 l10 -6 M1296 150 q4 1 3 6" fill="none" stroke="#e01818" stroke-width="1.5" /><path d="M1291 159 l5 2" fill="none" stroke="#2090e0" stroke-width="2" /><rect x="1297" y="159" width="9" height="1.8" fill="#e01818" /><rect x="1297" y="161.5" width="9" height="1.5" fill="#2090e0" /><path d="M1356 103 l7 -10 h24 l-7 10 z" fill="#ece4f4" /><path d="M1363 96.5 h16 M1361 100 h16" fill="none" stroke="#8c8494" stroke-width="1.6" /><path d="M1348 108 l6 -5 h33 l7 5 z" fill="#d8d0e4" /><rect x="1348" y="108" width="38" height="11" fill="#fbf8ff" /><path d="M1386 108 l8 -6 v11 l-8 6 z" fill="#c8c0d4" /><rect x="1368" y="113" width="9" height="3.5" fill="#e01818" /><path d="M1352 119.5 h34 l6 -4" fill="none" stroke="#a8a0b0" stroke-width="2.2" /><path d="M1414 93 h15 l6 6 v12.5 h-21 z" fill="#e8e8ec" /><path d="M1429 93 l6 6 h-6 z" fill="#e07868" /><rect x="1414" y="105" width="21.5" height="6.5" fill="#f08070" /><path d="M1418 108.5 h3 M1423.5 108.5 h3 M1429 108.5 h3" fill="none" stroke="#fbe8e0" stroke-width="2.2" /><path d="M1413 121 h6 v12 h-6 z" fill="#e0e0e4" stroke="#181818" stroke-width="1" /><path d="M1419 123 h6 v13 h-6 z" fill="#e8e8ec" stroke="#181818" stroke-width="1" /><path d="M1425 127 h6 l4 4 v7 h-10 z" fill="#f0f0f4" stroke="#181818" stroke-width="1.2" /><rect x="1421" y="147.5" width="15" height="7" fill="#e8e8f0" /><rect x="1421" y="149" width="15" height="1.4" fill="#3a3e4c" /><path d="M1412.5 164 v-9.5 h10" fill="none" stroke="#f0f0f0" stroke-width="1.8" /><rect x="1419.5" y="158" width="14" height="7" fill="#e0e4ea" /><rect x="1430" y="160" width="2" height="2" fill="#404040" /><rect x="1487.5" y="93" width="38" height="27" fill="#101010" /><path d="M1490 95.5 h33 v22 h-33 z M1509 95.5 v22 M1490 106 h19" fill="none" stroke="#f0f0f0" stroke-width="1.8" /><rect x="1493.5" y="98" width="12.5" height="5.5" fill="#186878" /><rect x="1493.5" y="109" width="12.5" height="6" fill="#186878" /><rect x="1512" y="98" width="9" height="10" fill="#1890a8" /><path d="M1496 101.5 q3 -2 7 0 M1496 112.5 q3 -2 7 0" fill="none" stroke="#40c0b0" stroke-width="1.3" /><rect x="1512.5" y="111" width="21.5" height="14" fill="#101018" /><rect x="1515" y="115.5" width="17" height="7" fill="#f8f8fc" /><path d="M1560 97.5 l7 -5 h16 l-7 5 z" fill="#e8e8ec" /><path d="M1560 101.5 l7 -5 h16 l-7 5 z" fill="#c0c0c8" /><path d="M1560 105.5 l7 -5 h16 l-7 5 z" fill="#e8e8ec" /><circle cx="1580" cy="102" r="4.2" fill="#1c98f0"/><circle cx="1579.5" cy="109.5" r="2" fill="#f0f0f0"/><rect x="1561" y="121" width="23" height="14" fill="#c0c4c8" stroke="#e8e8e8" stroke-width="1.2"/><path d="M1565 124 l6 8 h-6 z" fill="none" stroke="#808890" stroke-width="1.2" /><path d="M1562 152 h20 M1563 157 l18 -3 M1562 160 h22" fill="none" stroke="#18a090" stroke-width="1.8" /><circle cx="1579.5" cy="150" r="2.2" fill="#f0f0f0"/><rect x="1562" y="159" width="4" height="4" fill="#e8f020" /><path d="M1623 96 l3 7 l8 6 h-6 l-4 -3 l-4 4 h-6 l6 -8 z" fill="#e8e8e8" /><path d="M1631 97 h8 M1635 93 v8" fill="none" stroke="#c8e0d8" stroke-width="1.6" /><path d="M1623 124 l3 7 l8 6 h-6 l-4 -3 l-4 4 h-6 l6 -8 z" fill="#1c88e0" /><path d="M1631 125 h8 M1635 121 v8" fill="none" stroke="#c8e0d8" stroke-width="1.6" /><path d="M1623 151 l3 7 l8 6 h-6 l-4 -3 l-4 4 h-6 l6 -8 z" fill="#f09020" /><path d="M1631 152 h8 M1635 148 v8" fill="none" stroke="#c8e0d8" stroke-width="1.6" /><rect x="1609" y="176" width="1.8" height="11" fill="#c8cad0" /><rect x="1703" y="97.5" width="24" height="17" fill="none" stroke="#f0901c" stroke-width="2" stroke-dasharray="2.4 2.4"/><rect x="1690" y="106.5" width="25" height="18" fill="#3d4251" stroke="#f0901c" stroke-width="2.4"/><path d="M1700 110 h9 M1700 115 h9" fill="none" stroke="#f0901c" stroke-width="2" stroke-dasharray="2.4 2.4"/><rect x="1763.5" y="94" width="23" height="17" fill="#58a8e0" stroke="#d05878" stroke-width="1.6"/><rect x="1766" y="103" width="18" height="7" fill="#90c8f0" /><circle cx="1778" cy="100" r="3" fill="#e8f4fc"/><path d="M1766 122 h20" fill="none" stroke="#a0a4ac" stroke-width="1.2" /><path d="M1771 123 l12 12 M1783 124 l-9 10" fill="none" stroke="#f4f4f4" stroke-width="2.6" /><circle cx="1768" cy="135" r="2.6" fill="none" stroke="#5890d8" stroke-width="1.6"/><circle cx="1776" cy="136" r="2.6" fill="none" stroke="#5890d8" stroke-width="1.6"/><path d="M1764 136 q6 -6 14 -2" fill="none" stroke="#70a0e0" stroke-width="1.6" /><circle cx="1768" cy="160" r="3.4" fill="none" stroke="#e09020" stroke-width="1.8"/><circle cx="1778" cy="153" r="3.4" fill="none" stroke="#e02030" stroke-width="1.6"/><path d="M1771 158 l12 -10 M1773 150 l10 12 M1780 159 h6" fill="none" stroke="#e02030" stroke-width="1.6" /><circle cx="1768" cy="160" r="1.2" fill="#2060c0"/></svg>
</div>
<!-- doc -->
<div id="doc">
<div class="b" style="left:94px;top:199px;width:1731px;height:28px;background:#f3f3f3;background:linear-gradient(#dcdcdc,#f8f8f8 12%,#f4f4f4 85%,#dedede)"></div>
<div class="b" style="left:94px;top:227px;width:1731px;height:4px;background:#808080;background:linear-gradient(#bdbdbd,#5c5e64)"></div>
<div class="b" style="left:94px;top:231px;width:1731px;height:5px;background:#2a2d36;"></div>
<div class="b" style="left:101px;top:202px;width:2px;height:23px;background:#b0b0b0;"></div>
<div class="b" style="left:104px;top:202px;width:2px;height:23px;background:#c8c8c8;"></div>
<div class="b" style="left:112px;top:200px;width:160px;height:26px;background:#fbfbfb;"></div>
<div class="t" style="left:157.0px;top:201.8px;line-height:20px;font-size:15.37px;color:#1616f0;font-weight:700;transform:scaleX(1.325);">FAN_TEST</div>
<svg class="b" style="left:122px;top:201px" width="22" height="22" viewBox="122 201 22 22"><rect x="122" y="201" width="22" height="14" fill="#188878" /><path d="M125 205 h9 v7 h-9 z M134 208 h8" fill="none" stroke="#e8f8f0" stroke-width="1.6" /><rect x="136" y="203" width="6" height="3" fill="#e8f8f0" /><rect x="122" y="215" width="22" height="7" fill="#e01828" /><path d="M125 218.5 h4 M131 218.5 h4 M137 218.5 h4" fill="none" stroke="#f8c0c0" stroke-width="2" /></svg>
<div class="t" style="left:320.0px;top:202.8px;line-height:19px;font-size:14.31px;color:#2a2ab8;transform:scaleX(1.328);"><span style="font-size:88%;letter-spacing:1.35px">층별면적표</span>_test</div>
<svg class="b" style="left:283px;top:201px" width="22" height="22" viewBox="283 201 22 22"><rect x="283" y="201" width="22" height="14" fill="#6aa8a0" /><path d="M286 205 h9 v7 h-9 z M295 208 h8" fill="none" stroke="#e8f8f0" stroke-width="1.6" /><rect x="289" y="207" width="4" height="3" fill="#187868" /><rect x="297" y="203" width="6" height="3" fill="#e8f8f0" /><rect x="283" y="215" width="22" height="7" fill="#d0d0d0" /><path d="M286 218.5 h4 M292 218.5 h4 M298 218.5 h4" fill="none" stroke="#e8e8e8" stroke-width="2" /></svg>
<div class="t" style="left:509.0px;top:204.7px;line-height:16px;font-size:12.56px;color:#4a4a4a;transform:scaleX(1.467);">저두지구4</div>
<svg class="b" style="left:475px;top:201px" width="22" height="22" viewBox="475 201 22 22"><rect x="475" y="201" width="22" height="14" fill="#6aa8a0" /><path d="M478 205 h9 v7 h-9 z M487 208 h8" fill="none" stroke="#e8f8f0" stroke-width="1.6" /><rect x="481" y="207" width="4" height="3" fill="#187868" /><rect x="489" y="203" width="6" height="3" fill="#e8f8f0" /><rect x="475" y="215" width="22" height="7" fill="#d0d0d0" /><path d="M478 218.5 h4 M484 218.5 h4 M490 218.5 h4" fill="none" stroke="#e8e8e8" stroke-width="2" /></svg>
<div class="t" style="left:654.0px;top:202.8px;line-height:19px;font-size:14.31px;color:#4a4a4a;transform:scaleX(1.299);">02+-+<span style="font-size:88%;letter-spacing:1.35px">산지</span>+<span style="font-size:88%;letter-spacing:1.35px">경사도분석도</span>2</div>
<svg class="b" style="left:612px;top:201px" width="22" height="22" viewBox="612 201 22 22"><rect x="612" y="201" width="22" height="14" fill="#6aa8a0" /><path d="M615 205 h9 v7 h-9 z M624 208 h8" fill="none" stroke="#e8f8f0" stroke-width="1.6" /><rect x="618" y="207" width="4" height="3" fill="#187868" /><rect x="626" y="203" width="6" height="3" fill="#e8f8f0" /><rect x="612" y="215" width="22" height="7" fill="#d0d0d0" /><path d="M615 218.5 h4 M621 218.5 h4 M627 218.5 h4" fill="none" stroke="#e8e8e8" stroke-width="2" /></svg>
<div class="t" style="left:929.0px;top:204.7px;line-height:16px;font-size:12.56px;color:#4a4a4a;transform:scaleX(1.554);">아파트-동평입면도A</div>
<svg class="b" style="left:891px;top:201px" width="22" height="22" viewBox="891 201 22 22"><rect x="891" y="201" width="22" height="14" fill="#6aa8a0" /><path d="M894 205 h9 v7 h-9 z M903 208 h8" fill="none" stroke="#e8f8f0" stroke-width="1.6" /><rect x="897" y="207" width="4" height="3" fill="#187868" /><rect x="905" y="203" width="6" height="3" fill="#e8f8f0" /><rect x="891" y="215" width="22" height="7" fill="#d0d0d0" /><path d="M894 218.5 h4 M900 218.5 h4 M906 218.5 h4" fill="none" stroke="#e8e8e8" stroke-width="2" /></svg>
<div class="t" style="left:1160.0px;top:204.7px;line-height:16px;font-size:12.56px;color:#4a4a4a;transform:scaleX(1.330);">도면1</div>
<svg class="b" style="left:1122px;top:201px" width="22" height="22" viewBox="1122 201 22 22"><rect x="1122" y="201" width="22" height="14" fill="#6aa8a0" /><path d="M1125 205 h9 v7 h-9 z M1134 208 h8" fill="none" stroke="#e8f8f0" stroke-width="1.6" /><rect x="1128" y="207" width="4" height="3" fill="#187868" /><rect x="1136" y="203" width="6" height="3" fill="#e8f8f0" /><rect x="1122" y="215" width="22" height="7" fill="#d0d0d0" /><path d="M1125 218.5 h4 M1131 218.5 h4 M1137 218.5 h4" fill="none" stroke="#e8e8e8" stroke-width="2" /></svg>
<div class="b" style="left:272px;top:203px;width:2px;height:21px;background:#8c8c8c;"></div>
<div class="b" style="left:462px;top:203px;width:2px;height:21px;background:#8c8c8c;"></div>
<div class="b" style="left:600px;top:203px;width:2px;height:21px;background:#8c8c8c;"></div>
<div class="b" style="left:878px;top:203px;width:2px;height:21px;background:#8c8c8c;"></div>
<div class="b" style="left:1106px;top:203px;width:2px;height:21px;background:#8c8c8c;"></div>
<div class="b" style="left:94px;top:232px;width:84px;height:718px;background:#2b303c;"></div>
<div class="b" style="left:94px;top:234px;width:36.5px;height:716px;background:#373d4b;"></div>
<div class="b" style="left:135px;top:234px;width:36.5px;height:716px;background:#373d4b;"></div>
<svg class="b" style="left:94px;top:232px" width="84" height="718" viewBox="94 232 84 718"><g transform="translate(99 246.5) scale(1 1)"><rect x="0" y="2" width="24" height="11" fill="#050505" stroke="#18c8d0" stroke-width="1.6"/><rect x="18" y="4" width="4" height="2" fill="#18c8d0" /><rect x="0.5" y="13.5" width="23" height="3" fill="#e8e020" /><path d="M2 15 h20" fill="none" stroke="#202020" stroke-width="1" stroke-dasharray="2 1.5"/><rect x="0" y="17" width="24" height="1.4" fill="#f0f0f2" /></g><g transform="translate(99 278.5) scale(1 1)"><rect x="1" y="3" width="11" height="12" fill="#f4e0c0" stroke="#e8a040" stroke-width="1.4"/><path d="M4 8 h5 M4 11 h5" fill="none" stroke="#404040" stroke-width="1.2" /><path d="M15 15 l3 -8 l4 8 z" fill="#2890d8" /><path d="M24 14 v5 h-5 z" fill="#e8e8ec" /></g><g transform="translate(99 304.5) scale(1 1)"><path d="M1 5 h9 M1 9 h9 M14 5 h9 M14 9 h9" fill="none" stroke="#e8922a" stroke-width="2" /><path d="M1 7 h9 M14 7 h9" fill="none" stroke="#e03020" stroke-width="1.4" /><path d="M24 14 v5 h-5 z" fill="#e8e8ec" /></g><g transform="translate(99 327.5) scale(1 1)"><path d="M1 7 h22" fill="none" stroke="#c87830" stroke-width="1.4" /><path d="M8 7 h8" fill="none" stroke="#e02020" stroke-width="1.8" /><path d="M24 14 v5 h-5 z" fill="#e8e8ec" /></g><g transform="translate(99 352.0) scale(1 1)"><rect x="2" y="9" width="9" height="8" fill="#f0a020" /><rect x="13" y="2" width="9" height="8" fill="#e8c040" /><rect x="15" y="4" width="5" height="4" fill="#40d080" /><path d="M6 9 q2 -7 9 -5" fill="none" stroke="#e03020" stroke-width="1.6" /><path d="M24 14 v5 h-5 z" fill="#e8e8ec" /></g><g transform="translate(99 374.5) scale(1 1)"><circle cx="10" cy="9" r="7.5" fill="#1878b0"/><path d="M3 9 h14 M10 2 v14 M5 4 l10 10 M15 4 l-10 10" fill="none" stroke="#40d0f0" stroke-width="1.2" /><path d="M24 14 v5 h-5 z" fill="#e8e8ec" /></g><g transform="translate(99 400.0) scale(1 1)"><rect x="1.0" y="2" width="3.3" height="14" fill="#e81010" /><rect x="4.2" y="2" width="3.3" height="14" fill="#f07010" /><rect x="7.4" y="2" width="3.3" height="14" fill="#f0e010" /><rect x="10.600000000000001" y="2" width="3.3" height="14" fill="#30d020" /><rect x="13.8" y="2" width="3.3" height="14" fill="#10c0c0" /><rect x="17.0" y="2" width="3.3" height="14" fill="#2040e0" /><rect x="20.200000000000003" y="2" width="3.3" height="14" fill="#c020e0" /><path d="M24 14 v5 h-5 z" fill="#e8e8ec" /></g><g transform="translate(99 432.5) scale(1 1)"><path d="M1 3 v11 h22 v-11" fill="none" stroke="#e8922a" stroke-width="1.8" /><rect x="6" y="3" width="11" height="7" fill="#2060c0" /><path d="M9 3 v7 M13 3 v7" fill="none" stroke="#60c0f0" stroke-width="1.4" /><path d="M24 14 v5 h-5 z" fill="#e8e8ec" /></g><g transform="translate(99 457.0) scale(1 1)"><path d="M1 6 h22 M1 11 h22" fill="none" stroke="#d8d8dc" stroke-width="1.6" /><path d="M0 8.5 h24" fill="none" stroke="#e02020" stroke-width="1.6" /><path d="M24 14 v5 h-5 z" fill="#e8e8ec" /></g><g transform="translate(99 480.5) scale(1 1)"><rect x="1" y="2" width="22" height="4" fill="#f0b070" /><rect x="1" y="8" width="22" height="3.5" fill="#e02020" /><rect x="1" y="13" width="22" height="4" fill="#f0b070" /><path d="M3 4 h18 M3 15 h18" fill="none" stroke="#f0f0f2" stroke-width="1.2" /><path d="M24 14 v5 h-5 z" fill="#e8e8ec" /></g><g transform="translate(99 511.5) scale(1 1)"><rect x="1" y="4" width="22" height="11" fill="#f0b060" /><path d="M6 4 v11 M12 4 v11 M18 4 v11" fill="none" stroke="#f0f0f2" stroke-width="1.6" /><path d="M7 2 l8 12 M15 5 l-7 8" fill="none" stroke="#e02020" stroke-width="1.6" /><path d="M24 14 v5 h-5 z" fill="#e8e8ec" /></g><g transform="translate(99 537.0) scale(1 1)"><rect x="2" y="6" width="20" height="7" fill="none" stroke="#e8922a" stroke-width="1.8" rx="2"/><path d="M5 9.5 h14" fill="none" stroke="#f0c060" stroke-width="1.4" /><path d="M12 1 v17" fill="none" stroke="#e02020" stroke-width="1.2" /><path d="M24 14 v5 h-5 z" fill="#e8e8ec" /></g><g transform="translate(99 562.0) scale(1 1)"><path d="M1 15 h6 v-7 q7 -8 12 4 v3" fill="none" stroke="#e8922a" stroke-width="2" /><rect x="17" y="13" width="5" height="4" fill="#e0d8c0" /><path d="M24 14 v5 h-5 z" fill="#e8e8ec" /></g><g transform="translate(99 584.5) scale(1 1)"><rect x="2" y="8" width="11" height="9" fill="none" stroke="#e8922a" stroke-width="1.6"/><rect x="13" y="1.5" width="10" height="5" fill="#18d0c8" stroke="#101010" stroke-width="1"/><rect x="1" y="15" width="3" height="3" fill="#e02020" /><path d="M24 14 v5 h-5 z" fill="#e8e8ec" /></g><g transform="translate(99 610.5) scale(1 1)"><path d="M0 2 h24 v5 h-6 v10 h-12 v-10 h-6 z" fill="#209898" /><path d="M0 2 h24 M6 17 h12" fill="none" stroke="#e8922a" stroke-width="1.8" /><path d="M7 5 l8 10 M11 3 l8 9" fill="none" stroke="#60d0c8" stroke-width="1" /><path d="M24 14 v5 h-5 z" fill="#e8e8ec" /></g><g transform="translate(99 634.5) scale(1 1)"><rect x="2" y="2" width="20" height="14" fill="none" stroke="#e8922a" stroke-width="1.8"/><path d="M2 2 l20 14 M22 2 l-20 14" fill="none" stroke="#e8922a" stroke-width="1.4" /><rect x="20" y="1" width="3" height="3" fill="#e02020" /><rect x="1" y="15" width="3" height="3" fill="#e02020" /><path d="M24 14 v5 h-5 z" fill="#e8e8ec" /></g><g transform="translate(99 658.5) scale(1 1)"><path d="M3 2 h18 M3 16 h18 M12 2 v14" fill="none" stroke="#e8922a" stroke-width="2.4" /><path d="M24 14 v5 h-5 z" fill="#e8e8ec" /></g><g transform="translate(99 683.5) scale(1 1)"><rect x="3" y="1" width="18" height="16" fill="#b8b8a0" stroke="#e02818" stroke-width="2.6"/><rect x="7" y="5" width="10" height="8" fill="#a0a8a0" stroke="#e8922a" stroke-width="1"/><path d="M24 14 v5 h-5 z" fill="#e8e8ec" /></g><g transform="translate(99 714.5) scale(1 1)"><path d="M5 3 v12 h8 v-12 M5 9 h8 M18 1 v17 M18 8 h4" fill="none" stroke="#e8922a" stroke-width="2" /><path d="M24 14 v5 h-5 z" fill="#e8e8ec" /></g><g transform="translate(99 739.5) scale(1 1)"><path d="M3 6 l3 -2 v12 M9 7 q4 -5 6 0 q0 3 -6 9 h7" fill="none" stroke="#e8922a" stroke-width="1.8" /><path d="M18 2 h4 l-2.5 3 q3 1 1 4 q-2 1 -3 -1" fill="none" stroke="#e8922a" stroke-width="1.5" /><path d="M24 14 v5 h-5 z" fill="#e8e8ec" /></g><g transform="translate(99 770.5) scale(1 1)"><path d="M1 12 l8 -7 h14 l-8 7 z" fill="#f4e8d0" /><path d="M1 12 h14 v4 h-14 z" fill="#e89020" /><path d="M15 12 l8 -7 v4 l-8 7 z" fill="#c07018" /><path d="M24 14 v5 h-5 z" fill="#e8e8ec" /></g><g transform="translate(99 794.0) scale(1 1)"><path d="M2 1 v17 M22 1 v17 M2 5 h20 M2 14 h20" fill="none" stroke="#e8922a" stroke-width="1.6" /><path d="M8 3 v4 M14 3 v4 M8 12 v4 M16 12 v4" fill="none" stroke="#e8922a" stroke-width="1.4" /><circle cx="12" cy="9.5" r="1.5" fill="none" stroke="#f0d0a0" stroke-width="1"/><path d="M24 14 v5 h-5 z" fill="#e8e8ec" /></g><g transform="translate(99 819.0) scale(1 1)"><path d="M2 14 l18 -8" fill="none" stroke="#e08828" stroke-width="1.8" /><path d="M2 17 l20 -7" fill="none" stroke="#2888d8" stroke-width="1.8" /><path d="M4 4 q4 -4 6 2 l6 -2" fill="none" stroke="#e02828" stroke-width="1.8" /><path d="M24 14 v5 h-5 z" fill="#e8e8ec" /></g><g transform="translate(99 855.5) scale(1 1)"><rect x="1" y="7" width="18" height="10" fill="#2878d0" /><rect x="3" y="10" width="5" height="4" fill="#d8ecf8" /><rect x="10" y="10" width="5" height="4" fill="#d8ecf8" /><path d="M1 6 h18" fill="none" stroke="#f0f0f2" stroke-width="1.6" /><circle cx="20" cy="5" r="3" fill="#30c030"/><rect x="19.3" y="7" width="1.6" height="10" fill="#30a030" /><circle cx="4" cy="4" r="2" fill="#30c030"/></g><g transform="translate(99 879.5) scale(1 1)"><circle cx="6" cy="6" r="5" fill="#38c830"/><circle cx="10" cy="5" r="3.5" fill="#70e040"/><rect x="5" y="10" width="2.2" height="7" fill="#a07030" /><circle cx="17" cy="11" r="4" fill="#e0f0f4"/><path d="M19 14 l4 3" fill="none" stroke="#2890d0" stroke-width="2" /></g><g transform="translate(99 904.5) scale(1 1)"><circle cx="6" cy="6" r="5" fill="#38c830"/><circle cx="10" cy="5" r="3.5" fill="#70e040"/><rect x="5" y="10" width="2.2" height="7" fill="#a07030" /><path d="M13 13 h8 l-2 -2 M19 13 l-2 2" fill="none" stroke="#e89030" stroke-width="1.5" /></g><g transform="translate(99 928.0) scale(1 1)"><circle cx="6" cy="6" r="5" fill="#38c830"/><circle cx="10" cy="5" r="3.5" fill="#70e040"/><rect x="5" y="10" width="2.2" height="7" fill="#a07030" /><rect x="13" y="6" width="9" height="11" fill="#e8f0f8" stroke="#6090c0" stroke-width="1"/><path d="M15 9 h5 M15 12 h5 M15 15 h5" fill="none" stroke="#4070a0" stroke-width="1" /></g><g transform="translate(140.5 247.0) scale(1 1)"><path d="M2 4 l14 11 M16 3 l-14 12" fill="none" stroke="#f0f0f2" stroke-width="2.2" /><rect x="19" y="3" width="3" height="3" fill="#f0f0f2" /><rect x="19" y="8" width="3" height="3" fill="#f0f0f2" /><path d="M23 14 v5 h-5 z" fill="#f0f0f2" /></g><g transform="translate(140.5 278.0) scale(1 1)"><path d="M0 17 L8 10 Q12 8 16 10 L24 17 Z" fill="#8c3a1e" /><path d="M0 14 Q6 9 12 9 Q18 9 24 14" fill="none" stroke="#f0f0f2" stroke-width="1.4" /><rect x="0" y="16.5" width="24" height="1.6" fill="#f0f0f2" /><path d="M7 7 Q6 2 10 1 L12 3 L15 0.5 Q20 3 18 8 Q16 12 12 12 Q8 12 7 7 Z" fill="#ee2412" /><path d="M10 6 Q10 3 12 4 L14 3 Q16 5 15 7 Q12 9 10 6 Z" fill="#f6e018" /><path d="M20 13 l3 2 l-3 2" fill="none" stroke="#f0f0f2" stroke-width="1.2" /></g><g transform="translate(140.5 310.5) scale(1 1)"><path d="M1 5 h8 M5 1 v8 M14 5 h8" fill="none" stroke="#b87830" stroke-width="1.4" /><path d="M2 11 l6 6 M8 11 l-6 6 M14 14 h8" fill="none" stroke="#b87830" stroke-width="1.4" /><path d="M24 14 v5 h-5 z" fill="#e8e8ec" /></g><g transform="translate(140.5 335.0) scale(1 1)"><path d="M1 4 l0 12 l3 -3 l2.5 5 l2.5 -1.5 l-2.5 -4.5 h4 z" fill="#f0f0f2" stroke="#101010" stroke-width="0.8" /><path d="M9 1 l5 2 l-4 2 l5 2" fill="none" stroke="#f0b830" stroke-width="1.8" /><rect x="10" y="8" width="13" height="9.5" fill="#e8eef8" /><rect x="11.5" y="11" width="10" height="5.5" fill="#88b8e8" /><path d="M12 13.5 h9" fill="none" stroke="#e8eef8" stroke-width="0.8" /></g><g transform="translate(140.5 358.5) scale(1 1)"><rect x="1" y="5" width="21" height="12" fill="#2860a8" /><rect x="3" y="7" width="17" height="8.5" fill="#f0f0f4" /><path d="M5 13 h12 M5 10 h5" fill="none" stroke="#a8c0e0" stroke-width="1.4" /><path d="M7 14 L20 2" fill="none" stroke="#e8a020" stroke-width="3" /><path d="M18 4 l3 -3" fill="none" stroke="#c06040" stroke-width="2.6" /><path d="M22 13 v5 h-5 z" fill="#e8e8ec" /></g><g transform="translate(140.5 389.0) scale(1 1)"><path d="M5 7 l4 -5 h12 l-4 5 z" fill="#ece4f4" /><path d="M8 4.5 h10" fill="none" stroke="#d070b0" stroke-width="1.2" /><rect x="1" y="7" width="17" height="7" fill="#f8f4fc" /><path d="M18 7 l5 -4 v7 l-5 4 z" fill="#c8c0d4" /><path d="M3 10 h13 M3 12.5 h13" fill="none" stroke="#d060a0" stroke-width="1.2" /><path d="M2 15 h16 l4 -3" fill="none" stroke="#a8a0b0" stroke-width="1.8" /><path d="M24 14 v5 h-5 z" fill="#e8e8ec" /></g><g transform="translate(140.5 414.5) scale(1 1)"><path d="M10 4 l3 6 l9 6 h-6 l-4 -3 l-5 4 h-6 l7 -8 z" fill="#e0e0e4" /><path d="M15 3 h8 M19 -1 v8" fill="none" stroke="#a8d0c8" stroke-width="1.6" /></g><g transform="translate(140.5 439.5) scale(1 1)"><path d="M1 2 h8 q5 1 5 8 M6 12 h6 M7 16 h6" fill="none" stroke="#e8922a" stroke-width="1.5" /><rect x="12" y="6" width="11" height="11" fill="#e8eef8" /><circle cx="15" cy="9" r="1.4" fill="#e01020"/><circle cx="19.5" cy="9" r="1.4" fill="#101010"/><circle cx="15" cy="13.5" r="1.4" fill="#e01020"/><circle cx="19.5" cy="13.5" r="1.4" fill="#e01020"/><circle cx="17" cy="11" r="1.2" fill="#101010"/></g><g transform="translate(140.5 469.5) scale(1 1)"><rect x="3" y="1" width="14" height="11" fill="#186868" stroke="#101010" stroke-width="1.4"/><path d="M12 14 h9 v-6" fill="none" stroke="#f0f0f2" stroke-width="1.8" /><path d="M14 17 h8" fill="none" stroke="#f0f0f2" stroke-width="1.4" /></g><g transform="translate(140.5 493.5) scale(1 1)"><path d="M2 16 l7 -9 h6" fill="none" stroke="#e8922a" stroke-width="1.6" /><circle cx="17" cy="6" r="3.6" fill="none" stroke="#e8922a" stroke-width="1.6"/><circle cx="2.5" cy="15.5" r="1.6" fill="#e8922a"/><path d="M24 14 v5 h-5 z" fill="#e8e8ec" /></g><g transform="translate(140.5 517.5) scale(1 1)"><path d="M2 4 v12 h16" fill="none" stroke="#e8922a" stroke-width="1.6" /><path d="M3 15 l10 -8 M1 6 l1.5 -3 l1.5 3 M16 14.5 l3 1.5 l-3 1.5" fill="none" stroke="#e8922a" stroke-width="1.2" /><rect x="11" y="1" width="12" height="7" fill="#18d8d0" /><path d="M24 14 v5 h-5 z" fill="#e8e8ec" /></g><g transform="translate(140.5 542.0) scale(1 1)"><rect x="1" y="2" width="20" height="14" fill="#3060b0" /><path d="M1 6.5 h20 M1 11 h20 M7.5 2 v14 M14 2 v14" fill="none" stroke="#d0dcf0" stroke-width="1.2" /><rect x="2" y="3" width="5" height="3" fill="#d8e4f4" /><rect x="8.5" y="7.5" width="5" height="3" fill="#b8c8e8" /><path d="M24 14 v5 h-5 z" fill="#e8e8ec" /></g><g transform="translate(140.5 574.5) scale(1 1)"><path d="M1 9 q0 -4 3 -4 q3 0 3 4 l-1 4 h-4.5 z" fill="#10f010" /><rect x="1.5" y="14" width="4.5" height="3" fill="#10f010" rx="1"/><path d="M8 4 q0 -4 3.2 -4 q3.2 0 3.2 4 l-1 4 h-4.6 z" fill="#10f010" /><rect x="9" y="9" width="5" height="3" fill="#10f010" rx="1"/><path d="M16 6 l6 4 h-7 l7 4 h-9" fill="none" stroke="#c8ccd0" stroke-width="1.2" /><path d="M24 14 v5 h-5 z" fill="#e8e8ec" /></g><g transform="translate(140.5 598.5) scale(1 1)"><path d="M1 7 l7 -6 l7 6 l-7 6 z" fill="none" stroke="#d04028" stroke-width="1.5" /><path d="M3 8 l6 6 l7 -6" fill="none" stroke="#e8922a" stroke-width="1.3" /><rect x="15" y="11" width="8" height="6" fill="none" stroke="#e8922a" stroke-width="1.5"/><path d="M15 3 l5 3 l-1 -4" fill="none" stroke="#e8922a" stroke-width="1.5" /><path d="M24 14 v5 h-5 z" fill="#e8e8ec" /></g><g transform="translate(140.5 623.0) scale(1 1)"><path d="M1 1 v7 M12 1 v7 M23 1 v7 M1 4 h22" fill="none" stroke="#e8922a" stroke-width="1.5" /><path d="M2 10 h9 v3.5 h11 v4 h-20 z" fill="#fdfdff" stroke="#050505" stroke-width="1.6" /></g><g transform="translate(140.5 655.5) scale(1 1)"><rect x="2" y="7" width="13" height="10" fill="none" stroke="#e8922a" stroke-width="1.6"/><path d="M7 7 v-4 h13 v10 h-5" fill="none" stroke="#b87830" stroke-width="1.4" /><path d="M4 13 h9" fill="none" stroke="#b87830" stroke-width="1" /><path d="M24 14 v5 h-5 z" fill="#e8e8ec" /></g><g transform="translate(140.5 678.5) scale(1 1)"><path d="M1 3 Q7 1 12 4 Q17 1 23 3 V15 Q17 13.5 12 16.5 Q7 13.5 1 15 Z" fill="#fbfbff" stroke="#2828c8" stroke-width="1.6" /><path d="M7 6 h10 M12 6 v7" fill="none" stroke="#1818e8" stroke-width="2.2" /><path d="M24 14 v5 h-5 z" fill="#e8e8ec" /></g><g transform="translate(140.5 703.5) scale(1 1)"><circle cx="3" cy="7" r="1.8" fill="#3890e0"/><circle cx="9" cy="8" r="1.8" fill="#3890e0"/><circle cx="15" cy="4" r="1.8" fill="#3890e0"/><path d="M3 7 l6 1 l6 -4 l5 2" fill="none" stroke="#5888c0" stroke-width="1" /><path d="M10 14 h10" fill="none" stroke="#c8d0d8" stroke-width="1.4" /><path d="M14 11 l3 -2 v5" fill="none" stroke="#c8d0d8" stroke-width="1.2" /><path d="M24 14 v5 h-5 z" fill="#e8e8ec" /></g><g transform="translate(140.5 734.5) scale(1 1)"><rect x="2" y="2" width="10" height="13" fill="#d8102c" /><rect x="10" y="5" width="11" height="10" fill="#d8d8d8" /><rect x="1" y="15" width="20" height="1.5" fill="#b03030" /><path d="M24 14 v5 h-5 z" fill="#e8e8ec" /></g><g transform="translate(140.5 759.5) scale(1 1)"><rect x="0" y="1" width="24" height="15" fill="#080808" stroke="#f0f0f0" stroke-width="1.4"/><path d="M0 8.5 h24 M12 8.5 v7" fill="none" stroke="#f0f0f0" stroke-width="1.2" /><path d="M4 5 h16 M3 12 h6 M15 12 h6" fill="none" stroke="#f040e0" stroke-width="1.6" /><path d="M24 14 v5 h-5 z" fill="#e8e8ec" /></g><g transform="translate(140.5 790.5) scale(1 1)"><path d="M5 1 v13 M2 11 l3 4 l3 -4" fill="none" stroke="#e8922a" stroke-width="1.6" /><path d="M5 12 q1 -9 14 -10" fill="none" stroke="#e8922a" stroke-width="1.6" /><circle cx="20" cy="2" r="1.6" fill="#e8922a"/><path d="M24 14 v5 h-5 z" fill="#e8e8ec" /></g><g transform="translate(140.5 815.5) scale(1 1)"><path d="M1 14 l3 -8 l8 -2 l6 8 l4 -11" fill="none" stroke="#208888" stroke-width="1.4" /><rect x="10.5" y="2.5" width="3" height="3" fill="#e02030" /><rect x="16.5" y="10.5" width="3" height="3" fill="#e02030" /><path d="M1 16 l4 -3" fill="none" stroke="#e02030" stroke-width="1.4" /><path d="M20 6 v8" fill="none" stroke="#2860c0" stroke-width="1.2" /></g><g transform="translate(140.5 839.5) scale(1 1)"><path d="M1 10 l10 -5 h10" fill="none" stroke="#a8acb4" stroke-width="1.3" /><path d="M1 13 l5 -2" fill="none" stroke="#e02030" stroke-width="1.6" /><path d="M9 10 l5 4 l2 -3" fill="none" stroke="#2890c0" stroke-width="1.2" /><path d="M12 1 v3" fill="none" stroke="#a8acb4" stroke-width="1" /><path d="M24 14 v5 h-5 z" fill="#e8e8ec" /></g><g transform="translate(140.5 862.5) scale(1 1)"><path d="M2 3 l2 -1.5 v7 M8 4 v1 M8 7.5 v1 M11 3 l2 -1.5 v7 M16.5 8 v1 M20 2 h3 M20 2 v3 q4 -1 3 2.5 q-1 2 -3.5 0.5" fill="none" stroke="#e8922a" stroke-width="1.5" /><path d="M1 16 q10 -1 21 -5" fill="none" stroke="#c08838" stroke-width="1.4" /><path d="M1 18 h20" fill="none" stroke="#806030" stroke-width="1" /><path d="M24 14 v5 h-5 z" fill="#e8e8ec" /></g><g transform="translate(140.5 888.5) scale(1 1)"><rect x="1" y="1" width="22" height="16" fill="#e8ecd8" /><rect x="1" y="1" width="22" height="4" fill="#30a040" /><path d="M10 9 h6 v-3 l6 5 l-6 5 v-3 h-6 z" fill="#1878e0" stroke="#083060" stroke-width="0.8" /><rect x="3" y="7" width="5" height="8" fill="#c8ccb8" /></g><g transform="translate(140.5 913.0) scale(1 1)"><path d="M1 16 L13 3 H22 V16 Q12 18 3 16" fill="none" stroke="#e8922a" stroke-width="1.5" /><path d="M1 16 L13 3" fill="none" stroke="#3080d0" stroke-width="1.8" /></g><g transform="translate(140.5 935.5) scale(1 1)"><path d="M1 4 h22" fill="none" stroke="#e8922a" stroke-width="2" /><path d="M3 4 v9 M7 4 v12 M11 4 v9 M15 4 v12 M19 4 v9" fill="none" stroke="#e8922a" stroke-width="1.5" /></g><rect x="97" y="271.2" width="29" height="1.6" fill="#e4e4e8" /><rect x="97" y="425.2" width="29" height="1.6" fill="#e4e4e8" /><rect x="97" y="505.2" width="29" height="1.6" fill="#e4e4e8" /><rect x="97" y="708.2" width="29" height="1.6" fill="#e4e4e8" /><rect x="97" y="763.2" width="29" height="1.6" fill="#e4e4e8" /><rect x="138.5" y="271.2" width="29" height="1.6" fill="#e4e4e8" /><rect x="138.5" y="302.7" width="29" height="1.6" fill="#e4e4e8" /><rect x="138.5" y="382.7" width="29" height="1.6" fill="#e4e4e8" /><rect x="138.5" y="462.2" width="29" height="1.6" fill="#e4e4e8" /><rect x="138.5" y="567.2" width="29" height="1.6" fill="#e4e4e8" /><rect x="138.5" y="648.2" width="29" height="1.6" fill="#e4e4e8" /><rect x="138.5" y="728.2" width="29" height="1.6" fill="#e4e4e8" /><rect x="138.5" y="784.2" width="29" height="1.6" fill="#e4e4e8" /><path d="M99 238 h20" fill="none" stroke="#7c8090" stroke-width="2" stroke-dasharray="2 1.5"/><path d="M140 238 h20" fill="none" stroke="#7c8090" stroke-width="2" stroke-dasharray="2 1.5"/><path d="M99 847 h20" fill="none" stroke="#9a9eac" stroke-width="2" stroke-dasharray="2 1.5"/></svg>
</div>
<!-- draw -->
<div id="draw">
<div class="b" style="left:178px;top:236px;width:1647px;height:714px;background:#212730;"></div>
<svg class="b" style="left:178px;top:236px;" width="1647" height="714" viewBox="0 0 1647 714"><polygon points="0.0,415.0 117.0,428.0 129.5,484.5 39.0,507.0 0.0,499.0" fill="#ff78c6"/><polygon points="145.0,419.0 238.5,354.0 340.5,385.5 374.0,452.5 324.0,490.0" fill="#7c4d75"/><path d="M0 606.7 H90.30000000000001 V549 H208 V606.7 H434.70000000000005 V637.3 H270.3 A187.5 187.5 0 0 1 23.69999999999999 637.3 H0" fill="none" stroke="#c3c30a" stroke-width="2"/><path d="M25 640 V691 M30 695 H99" stroke="#c8c8c8" stroke-width="1.3" fill="none"/><rect x="19" y="690" width="11" height="10" fill="none" stroke="#c8c8c8" stroke-width="1.3"/><path d="M27 620 L35 627 L44 620 M35 627 V636" stroke="#c8c8c8" stroke-width="1.5" fill="none"/><path d="M105 679 L123 695 M123 679 L105 695" stroke="#c8c8c8" stroke-width="1.5" fill="none"/><line x1="0" y1="225" x2="132" y2="225" stroke="#12aeb4" stroke-width="2"/><line x1="0" y1="251.3" x2="132" y2="251.3" stroke="#12aeb4" stroke-width="2"/><line x1="0" y1="279.20000000000005" x2="132" y2="279.20000000000005" stroke="#12aeb4" stroke-width="1.3"/><line x1="0" y1="306.20000000000005" x2="132" y2="306.20000000000005" stroke="#12aeb4" stroke-width="1.3"/><line x1="0" y1="333.79999999999995" x2="132" y2="333.79999999999995" stroke="#12aeb4" stroke-width="1.3"/><line x1="0" y1="361" x2="132" y2="361" stroke="#12aeb4" stroke-width="1.3"/><line x1="0" y1="388" x2="132" y2="388" stroke="#12aeb4" stroke-width="1.3"/><line x1="58.80000000000001" y1="224" x2="58.80000000000001" y2="388.5" stroke="#12aeb4" stroke-width="1.5"/><line x1="131.2" y1="224" x2="131.2" y2="388.5" stroke="#12aeb4" stroke-width="1.5"/><line x1="636" y1="140.5" x2="1647" y2="140.5" stroke="#14b4b8" stroke-width="1.9"/><line x1="636" y1="183.5" x2="1647" y2="183.5" stroke="#14b4b8" stroke-width="1.9"/><line x1="703" y1="227" x2="1647" y2="227" stroke="#14b4b8" stroke-width="1.9"/><line x1="703" y1="270.5" x2="1647" y2="270.5" stroke="#14b4b8" stroke-width="1.9"/><line x1="703" y1="314" x2="1647" y2="314" stroke="#14b4b8" stroke-width="1.9"/><line x1="703" y1="358" x2="1647" y2="358" stroke="#14b4b8" stroke-width="1.9"/><line x1="636" y1="401.70000000000005" x2="1647" y2="401.70000000000005" stroke="#14b4b8" stroke-width="1.9"/><line x1="703" y1="445.20000000000005" x2="1647" y2="445.20000000000005" stroke="#14b4b8" stroke-width="1.9"/><line x1="703" y1="488.70000000000005" x2="1647" y2="488.70000000000005" stroke="#14b4b8" stroke-width="1.9"/><line x1="703" y1="532.2" x2="1647" y2="532.2" stroke="#14b4b8" stroke-width="1.9"/><line x1="703" y1="575.6" x2="1647" y2="575.6" stroke="#14b4b8" stroke-width="1.9"/><line x1="703" y1="619.2" x2="1647" y2="619.2" stroke="#14b4b8" stroke-width="1.9"/><line x1="703" y1="662.8" x2="1647" y2="662.8" stroke="#14b4b8" stroke-width="1.9"/><line x1="636" y1="706.3" x2="1647" y2="706.3" stroke="#14b4b8" stroke-width="1.9"/><line x1="636.5" y1="139.5" x2="636.5" y2="714" stroke="#14b4b8" stroke-width="1.9"/><line x1="703" y1="183.5" x2="703" y2="714" stroke="#14b4b8" stroke-width="1.9"/><line x1="915" y1="139.5" x2="915" y2="714" stroke="#14b4b8" stroke-width="1.9"/><line x1="1212.5" y1="488.70000000000005" x2="1212.5" y2="714" stroke="#14b4b8" stroke-width="1.9"/><line x1="1516" y1="139.5" x2="1516" y2="714" stroke="#14b4b8" stroke-width="1.9"/><rect x="645.5" y="106" width="36.5" height="26" fill="#ff0000"/></svg>
<div class="t" style="left:182.0px;top:240.0px;line-height:19px;font-size:14.31px;color:#c8cad0;transform:scaleX(1.400);">[-][<span style="font-size:88%;letter-spacing:1.35px">평면도</span>][2D <span style="font-size:88%;letter-spacing:1.35px">와이어프레임</span>]</div>
<div class="t" style="left:880.0px;top:336.5px;line-height:40px;font-size:31px;color:#ff1010;font-weight:300;transform:scaleX(1.569);">설계개요</div>
<div class="t" style="left:903.0px;top:383.5px;line-height:29px;font-size:22px;color:#18c828;font-weight:300;transform:scaleX(1.398);">공 사 명</div>
<div class="t" style="left:930.0px;top:427.5px;line-height:29px;font-size:22px;color:#e018e0;font-weight:300;transform:scaleX(1.402);">대지위치</div>
<div class="t" style="left:930.0px;top:471.5px;line-height:29px;font-size:22px;color:#e018e0;font-weight:300;transform:scaleX(1.433);">지역지구</div>
<div class="t" style="left:931.0px;top:515.0px;line-height:29px;font-size:22px;color:#e018e0;font-weight:300;transform:scaleX(1.389);">도로현황</div>
<div class="t" style="left:958.5px;top:558.5px;line-height:29px;font-size:22px;color:#e018e0;font-weight:300;transform:scaleX(1.341);">용 도</div>
<div class="t" style="left:930.0px;top:602.0px;line-height:29px;font-size:22px;color:#e018e0;font-weight:300;transform:scaleX(1.402);">대지면적</div>
<div class="t" style="left:956.0px;top:645.5px;line-height:29px;font-size:22px;color:#e018e0;font-weight:300;transform:scaleX(1.395);">층 수</div>
<div class="t" style="left:956.0px;top:689.0px;line-height:29px;font-size:22px;color:#e018e0;font-weight:300;transform:scaleX(1.395);">구 조</div>
<div class="t" style="left:930.5px;top:733.0px;line-height:29px;font-size:22px;color:#e018e0;font-weight:300;transform:scaleX(1.389);">건축면적</div>
<div class="t" style="left:945.0px;top:776.0px;line-height:29px;font-size:22px;color:#e018e0;font-weight:300;transform:scaleX(1.383);">연면적</div>
<div class="t" style="left:899.5px;top:819.5px;line-height:29px;font-size:22px;color:#e018e0;font-weight:300;transform:scaleX(1.429);">지상층연면적</div>
<div class="t" style="left:899.5px;top:863.0px;line-height:29px;font-size:22px;color:#e018e0;font-weight:300;transform:scaleX(1.429);">지하층연면적</div>
<div class="t" style="left:935.0px;top:907.0px;line-height:29px;font-size:22px;color:#e018e0;font-weight:300;transform:scaleX(1.453);">건 폐 율</div>
<div class="t" style="left:834.0px;top:473.5px;line-height:29px;font-size:22px;color:#18c828;font-weight:300;transform:scaleX(1.434);">공</div>
<div class="t" style="left:834.0px;top:501.0px;line-height:29px;font-size:22px;color:#18c828;font-weight:300;transform:scaleX(1.434);">사</div>
<div class="t" style="left:834.0px;top:529.0px;line-height:29px;font-size:22px;color:#18c828;font-weight:300;transform:scaleX(1.434);">개</div>
<div class="t" style="left:834.0px;top:556.0px;line-height:29px;font-size:22px;color:#18c828;font-weight:300;transform:scaleX(1.434);">요</div>
<div class="t" style="left:834.0px;top:822.5px;line-height:29px;font-size:22px;color:#18c828;font-weight:300;transform:scaleX(1.434);">건</div>
<div class="t" style="left:834.0px;top:849.5px;line-height:29px;font-size:22px;color:#18c828;font-weight:300;transform:scaleX(1.434);">설</div>
<div class="t" style="left:834.0px;top:876.5px;line-height:29px;font-size:22px;color:#18c828;font-weight:300;transform:scaleX(1.434);">규</div>
<div class="t" style="left:834.0px;top:904.0px;line-height:29px;font-size:22px;color:#18c828;font-weight:300;transform:scaleX(1.434);">모</div>
<div class="t" style="left:1103.0px;top:383.5px;line-height:29px;font-size:22px;color:#d2d22a;font-weight:300;transform:scaleX(1.354);">부산광역시</div>
<div class="t" style="left:1103.0px;top:427.5px;line-height:29px;font-size:22px;color:#d2d22a;font-weight:300;transform:scaleX(1.354);">부산광역시</div>
<div class="t" style="left:1101.0px;top:471.5px;line-height:29px;font-size:22px;color:#d2d22a;font-weight:300;transform:scaleX(1.350);">일반상업지역</div>
<div class="t n" style="left:1103.0px;top:516.5px;line-height:27px;font-size:21px;color:#d2d22a;font-weight:200;transform:scaleX(1.208);">15m</div>
<div class="t" style="left:1168.0px;top:515.0px;line-height:29px;font-size:22px;color:#d2d22a;font-weight:300;transform:scaleX(1.408);">도로</div>
<div class="t" style="left:1103.0px;top:558.5px;line-height:29px;font-size:22px;color:#d2d22a;font-weight:300;transform:scaleX(1.346);">오피스텔</div>
<div class="t" style="left:1101.0px;top:645.5px;line-height:29px;font-size:22px;color:#d2d22a;font-weight:300;transform:scaleX(1.378);">지하 5층</div>
<div class="t" style="left:1101.0px;top:689.0px;line-height:29px;font-size:22px;color:#d2d22a;font-weight:300;transform:scaleX(1.350);">철근콘크리트</div>
<div class="t n" style="left:1173.0px;top:734.5px;line-height:27px;font-size:21px;color:#d2d22a;font-weight:200;transform:scaleX(1.230);">2,441.21</div>
<div class="t n" style="left:1153.0px;top:777.5px;line-height:27px;font-size:21px;color:#d2d22a;font-weight:200;transform:scaleX(1.282);">85,267.90</div>
<div class="t n" style="left:1153.0px;top:821.0px;line-height:27px;font-size:21px;color:#d2d22a;font-weight:200;transform:scaleX(1.282);">64,544.23</div>
<div class="t n" style="left:1153.0px;top:864.5px;line-height:27px;font-size:21px;color:#d2d22a;font-weight:200;transform:scaleX(1.282);">20,723.67</div>
<div class="t n" style="left:1220.0px;top:908.0px;line-height:27px;font-size:21px;color:#d2d22a;font-weight:200;transform:scaleX(1.303);">36.63 %</div>
<div class="t n" style="left:1504.0px;top:734.5px;line-height:27px;font-size:21px;color:#d2d22a;font-weight:200;transform:scaleX(1.238);">738.47</div>
<div class="t n" style="left:1456.5px;top:778.0px;line-height:27px;font-size:21px;color:#d2d22a;font-weight:200;transform:scaleX(1.296);">25,793.54</div>
<div class="t n" style="left:1459.0px;top:821.0px;line-height:27px;font-size:21px;color:#d2d22a;font-weight:200;transform:scaleX(1.272);">19,524.63</div>
<div class="t n" style="left:1476.0px;top:864.5px;line-height:27px;font-size:21px;color:#d2d22a;font-weight:200;transform:scaleX(1.273);">6,268.91</div>
<div class="t n" style="left:1530.0px;top:908.0px;line-height:27px;font-size:21px;color:#d2d22a;font-weight:200;transform:scaleX(1.291);">50.00 %</div>
<div class="t n" style="left:1310.0px;top:736.5px;line-height:26px;font-size:20px;color:#d2d22a;font-weight:200;transform:scaleX(0.821);">m</div>
<div class="t n" style="left:1326.5px;top:735.5px;line-height:12px;font-size:9px;color:#d2d22a;font-weight:200;transform:scaleX(0.959);">2</div>
<div class="t" style="left:1609.0px;top:734.0px;line-height:27px;font-size:21px;color:#d2d22a;font-weight:300;transform:scaleX(1.293);">평</div>
<div class="t n" style="left:1310.0px;top:779.5px;line-height:26px;font-size:20px;color:#d2d22a;font-weight:200;transform:scaleX(0.821);">m</div>
<div class="t n" style="left:1326.5px;top:778.5px;line-height:12px;font-size:9px;color:#d2d22a;font-weight:200;transform:scaleX(0.959);">2</div>
<div class="t" style="left:1609.0px;top:777.0px;line-height:27px;font-size:21px;color:#d2d22a;font-weight:300;transform:scaleX(1.293);">평</div>
<div class="t n" style="left:1310.0px;top:823.0px;line-height:26px;font-size:20px;color:#d2d22a;font-weight:200;transform:scaleX(0.821);">m</div>
<div class="t n" style="left:1326.5px;top:822.0px;line-height:12px;font-size:9px;color:#d2d22a;font-weight:200;transform:scaleX(0.959);">2</div>
<div class="t" style="left:1609.0px;top:820.5px;line-height:27px;font-size:21px;color:#d2d22a;font-weight:300;transform:scaleX(1.293);">평</div>
<div class="t n" style="left:1310.0px;top:866.5px;line-height:26px;font-size:20px;color:#d2d22a;font-weight:200;transform:scaleX(0.821);">m</div>
<div class="t n" style="left:1326.5px;top:865.5px;line-height:12px;font-size:9px;color:#d2d22a;font-weight:200;transform:scaleX(0.959);">2</div>
<div class="t" style="left:1609.0px;top:864.0px;line-height:27px;font-size:21px;color:#d2d22a;font-weight:300;transform:scaleX(1.293);">평</div>
<div class="t" style="left:1440.5px;top:906.0px;line-height:29px;font-size:22px;color:#d2d22a;font-weight:300;transform:scaleX(1.356);">법정 :</div>
<div class="t" style="left:1610.0px;top:602.0px;line-height:27px;font-size:21px;color:#d2d22a;font-weight:300;transform:scaleX(1.293);">평</div>
<div class="t" style="left:1598.0px;top:383.5px;line-height:29px;font-size:22px;color:#d2d22a;font-weight:300;transform:scaleX(1.185);">ㅏ</div>
<div class="t" style="left:1605.0px;top:473.0px;line-height:17px;font-size:12.72px;color:#d2d22a;transform:scaleX(0.989);">2</div>
<div class="t" style="left:248.5px;top:470.9px;line-height:10px;font-size:7.5px;color:#b9b930;transform:scaleX(1.724);">면적(m²)</div>
<div class="t n" style="left:279.0px;top:500.0px;line-height:8px;font-size:6.5px;color:#b9b930;transform:scaleX(1.547);">.62</div>
<div class="t n" style="left:269.5px;top:495.5px;line-height:14px;font-size:11px;color:#b9b930;font-weight:200;transform:scaleX(1.357);">6</div>
<div class="t n" style="left:279.0px;top:527.0px;line-height:8px;font-size:6.5px;color:#b9b930;transform:scaleX(1.547);">.13</div>
<div class="t n" style="left:269.5px;top:522.5px;line-height:14px;font-size:11px;color:#b9b930;font-weight:200;transform:scaleX(1.357);">9</div>
<div class="t n" style="left:279.0px;top:554.0px;line-height:8px;font-size:6.5px;color:#b9b930;transform:scaleX(1.547);">.82</div>
<div class="t n" style="left:269.5px;top:549.5px;line-height:14px;font-size:11px;color:#b9b930;font-weight:200;transform:scaleX(1.357);">1</div>
<div class="t n" style="left:279.0px;top:581.0px;line-height:8px;font-size:6.5px;color:#b9b930;transform:scaleX(1.547);">.81</div>
<div class="t n" style="left:269.5px;top:576.5px;line-height:14px;font-size:11px;color:#b9b930;font-weight:200;transform:scaleX(1.357);">3</div>
<div class="t n" style="left:279.0px;top:608.0px;line-height:8px;font-size:6.5px;color:#b9b930;transform:scaleX(1.547);">.38</div>
<div class="t n" style="left:260.0px;top:603.5px;line-height:14px;font-size:11px;color:#b9b930;font-weight:200;transform:scaleX(1.357);">21</div>
<div class="t n" style="left:185.0px;top:495.5px;line-height:14px;font-size:11px;color:#b9b930;font-weight:200;transform:scaleX(1.214);">2</div>
<div class="b" style="left:179px;top:496.5px;width:1.5px;height:3px;background:#8a8a30;"></div>
<div class="t n" style="left:185.0px;top:522.5px;line-height:14px;font-size:11px;color:#b9b930;font-weight:200;transform:scaleX(1.214);">2</div>
<div class="b" style="left:179px;top:523.5px;width:1.5px;height:3px;background:#8a8a30;"></div>
</div>
<!-- bottom -->
<div id="bottom">
<div class="b" style="left:94px;top:950px;width:1731px;height:8px;background:#2c2f3a;background:linear-gradient(#23262f,#4a4e5c)"></div>
<div class="b" style="left:94px;top:957px;width:37px;height:84px;background:#353a48;"></div>
<div class="b" style="left:131px;top:957px;width:1694px;height:61px;background:#c6c6c6;"></div>
<div class="b" style="left:131px;top:1017px;width:1694px;height:1px;background:#707070;"></div>
<div class="b" style="left:131px;top:1018px;width:1694px;height:23px;background:#fcfcfc;"></div>
<div class="b" style="left:94px;top:1041px;width:1731px;height:39px;background:#232a35;"></div>
<div class="t m" style="left:134.0px;top:964.5px;line-height:19px;font-size:14.5px;color:#1c1c1c;transform:scaleX(1.172);">TEXTLINE</div>
<div class="t m" style="left:134.0px;top:981.5px;line-height:19px;font-size:14.5px;color:#1c1c1c;transform:scaleX(1.172);">ArchiOffice XPress Version 23.03, </div>
<div class="t m" style="left:481.8px;top:981.0px;line-height:19px;font-size:14.5px;color:#1c1c1c;transform:scaleX(1.479);">저작권</div>
<div class="t m" style="left:542.0px;top:981.5px;line-height:19px;font-size:14.5px;color:#1c1c1c;transform:scaleX(1.172);"> © 2000~2023 </div>
<div class="t m" style="left:675.6px;top:981.0px;line-height:19px;font-size:14.5px;color:#1c1c1c;transform:scaleX(1.510);">한국건축정보기술</div>
<div class="t m" style="left:837.8px;top:981.5px;line-height:19px;font-size:14.5px;color:#1c1c1c;transform:scaleX(1.172);">(</div>
<div class="t m" style="left:849.0px;top:981.0px;line-height:19px;font-size:14.5px;color:#1c1c1c;transform:scaleX(1.379);">주</div>
<div class="t m" style="left:868.4px;top:981.5px;line-height:19px;font-size:14.5px;color:#1c1c1c;transform:scaleX(1.172);">)</div>
<div class="t m" style="left:134.0px;top:998.0px;line-height:19px;font-size:14.5px;color:#1c1c1c;transform:scaleX(1.172);">&lt;TEXT LINE </div>
<div class="t m" style="left:247.2px;top:997.5px;line-height:19px;font-size:14.5px;color:#1c1c1c;transform:scaleX(1.454);">정렬</div>
<div class="t m" style="left:287.0px;top:998.0px;line-height:19px;font-size:14.5px;color:#1c1c1c;transform:scaleX(1.172);">&gt;: TEXTLINE  </div>
<div class="t m" style="left:420.6px;top:997.5px;line-height:19px;font-size:14.5px;color:#1c1c1c;transform:scaleX(1.479);">단축키</div>
<div class="t m" style="left:480.8px;top:998.0px;line-height:19px;font-size:14.5px;color:#1c1c1c;transform:scaleX(1.172);">: TXTL</div>
<div class="t" style="left:185.0px;top:1021.0px;line-height:16px;font-size:12.56px;color:#a8a8a8;font-style:italic;transform:scaleX(1.711);">명령 입력</div>
<div class="b" style="left:163px;top:1042px;width:70px;height:34px;background:#3d4251;transform:skewX(-22deg)"></div>
<div class="t" style="left:180.0px;top:1053.4px;line-height:16px;font-size:12.56px;color:#e6e8ee;transform:scaleX(1.472);">모형</div>
<div class="t" style="left:251.0px;top:1053.4px;line-height:16px;font-size:12.56px;color:#c9cbd2;transform:scaleX(1.463);">배치1</div>
<div class="b" style="left:1002px;top:1046px;width:90px;height:30px;background:#2f3442;"></div>
<div class="b" style="left:1362px;top:1046px;width:463px;height:30px;background:#2f3442;"></div>
<div class="b" style="left:1094px;top:1046px;width:266px;height:30px;background:#2f3442;"></div>
<div class="t" style="left:1003.0px;top:1052.5px;line-height:19px;font-size:14.31px;color:#d8dae0;transform:scaleX(1.263);">ArchiOffice</div>
<div class="t" style="left:1108.5px;top:1052.5px;line-height:19px;font-size:14.31px;color:#d8dae0;transform:scaleX(1.223);">1277861.84, -2619643.60, 0.00</div>
<div class="t" style="left:1370.0px;top:1054.4px;line-height:16px;font-size:12.56px;color:#d8dae0;transform:scaleX(1.472);">모형</div>
<svg class="b" style="left:94px;top:950px" width="1731" height="130" viewBox="94 950 1731 130"><path d="M99 961.5 h25 M99 964.5 h25" fill="none" stroke="#d0d2d8" stroke-width="1.6" stroke-dasharray="2 1.4"/><path d="M104.5 975.5 l12 11 M116.5 975.5 l-12 11" fill="none" stroke="#e8e8ec" stroke-width="2.4" /><path d="M100.5 1014 l11 -8.5" fill="none" stroke="#e8e8ec" stroke-width="3.2" /><path d="M119.5 1001.5 q-6 -1.5 -8 3.5 q0.5 4 5 3.5 q4 -1 4.5 -4.5 l-4 2.5 l-2 -2.5 z" fill="#e8e8ec" /><rect x="136.5" y="1024" width="22.5" height="12" fill="#f4f4f4" stroke="#8a8a8a" stroke-width="1.4"/><rect x="136.5" y="1024" width="22.5" height="3" fill="#8a8a8a" /><path d="M140 1029.5 l3 2 l-3 2 M145 1034 h6" fill="none" stroke="#505050" stroke-width="1.1" /><path d="M164.5 1027.5 h8 l-4 4 z" fill="#505050"/><rect x="116" y="1052.7" width="25" height="2.2" fill="#f0f0f4" /><rect x="116" y="1058.5" width="25" height="2.2" fill="#f0f0f4" /><rect x="116" y="1064.3000000000002" width="25" height="2.2" fill="#f0f0f4" /><path d="M318 1052 l-5 16 M380 1052 l-5 16" fill="none" stroke="#4a4e5c" stroke-width="1.4" /><path d="M334.5 1060 h21 M345 1049.5 v21" fill="none" stroke="#f0f0f4" stroke-width="2.6" /><path d="M1416 1056.5 h22 M1416 1064.5 h22 M1422.5 1050 v21 M1431 1050 v21" fill="none" stroke="#e4e4e8" stroke-width="1.7" /><rect x="1453.5" y="1053.5" width="3.2" height="2.4" fill="#d0d2d8" /><rect x="1453.5" y="1059.5" width="3.2" height="2.4" fill="#d0d2d8" /><rect x="1453.5" y="1065.5" width="3.2" height="2.4" fill="#d0d2d8" /><rect x="1461.5" y="1053.5" width="3.2" height="2.4" fill="#d0d2d8" /><rect x="1461.5" y="1059.5" width="3.2" height="2.4" fill="#d0d2d8" /><rect x="1461.5" y="1065.5" width="3.2" height="2.4" fill="#d0d2d8" /><rect x="1469.5" y="1053.5" width="3.2" height="2.4" fill="#d0d2d8" /><rect x="1469.5" y="1059.5" width="3.2" height="2.4" fill="#d0d2d8" /><rect x="1469.5" y="1065.5" width="3.2" height="2.4" fill="#d0d2d8" /><path d="M1487.5 1059 h10 l-5 5 z" fill="#e0e2e8"/><rect x="1510" y="1050" width="34" height="24.5" fill="#5c8fd0" /><path d="M1516 1059 h9 M1520.5 1054.5 v9" fill="none" stroke="#f0f0f4" stroke-width="1.6" /><rect x="1524.5" y="1063.5" width="13" height="4.5" fill="#f0f0f4" rx="1"/><path d="M1553 1054 v16.5 h22 M1553 1065.5 h5.5 v5" fill="none" stroke="#e4e4e8" stroke-width="1.5" /><rect x="1582.5" y="1050" width="34" height="24.5" fill="#5c8fd0" /><circle cx="1597.5" cy="1062.5" r="7.5" fill="none" stroke="#b8f0e0" stroke-width="1.5"/><path d="M1597.5 1062.5 h14 M1597.5 1062.5 l9 -8" fill="none" stroke="#f0f0f4" stroke-width="1.5" /><path d="M1624 1059 h10 l-5 5 z" fill="#e0e2e8"/><path d="M1648 1054 l20 16" fill="none" stroke="#d03858" stroke-width="1.6" /><path d="M1658 1053 v18" fill="none" stroke="#30a878" stroke-width="1.4" /><rect x="1656" y="1059.5" width="4" height="4" fill="#e8e8e8" /><path d="M1683.5 1059 h10 l-5 5 z" fill="#e0e2e8"/><rect x="1703.5" y="1050" width="33" height="24.5" fill="#5c8fd0" /><path d="M1708 1068.5 h24 M1708 1068.5 l21 -12" fill="none" stroke="#f0f0f4" stroke-width="1.5" /><rect x="1716" y="1060" width="3.5" height="3.5" fill="#f0f0f4" /><rect x="1747.5" y="1056.5" width="20" height="14" fill="none" stroke="#e4e4e8" stroke-width="1.5"/><rect x="1744" y="1053.5" width="6.5" height="5.5" fill="#3a3e4c" stroke="#e8c890" stroke-width="1.3"/><path d="M1780 1059 h10 l-5 5 z" fill="#e0e2e8"/><rect x="1803" y="1050" width="22" height="24.5" fill="#5c8fd0" /><path d="M1816 1053 l-1 9 l-8 8 h5 l6 -6 l4 5 h4 l-5 -9 v-7 z" fill="#f0f0f4" /></svg>
</div>
<!-- menu -->
<div id="menu">
<div class="b" style="left:1154px;top:168px;width:450px;height:560px;background:#464b5f;box-shadow:0 0 0 1px #3a3e4e"></div>
<div class="b" style="left:1156px;top:217px;width:446px;height:40px;background:#2a323e;"></div>
<div class="b" style="left:1156px;top:307px;width:446px;height:1px;background:#3b3f50;"></div>
<div class="b" style="left:1156px;top:402px;width:446px;height:1px;background:#3b3f50;"></div>
<div class="b" style="left:1156px;top:540.5px;width:446px;height:1px;background:#3b3f50;"></div>
<div class="b" style="left:1156px;top:635.5px;width:446px;height:1px;background:#3b3f50;"></div>
<div class="t" style="left:1213.0px;top:184.0px;line-height:19px;font-size:14.31px;color:#c2c5ce;transform:scaleX(1.220);"><span style="font-size:88%;letter-spacing:1.35px">문자 사전</span>: T_TLB</div>
<div class="t" style="left:1213.0px;top:228.0px;line-height:19px;font-size:14.31px;color:#c2c5ce;transform:scaleX(1.233);"><span style="font-size:88%;letter-spacing:1.35px">글꼴 교체</span>: XFONTS</div>
<div class="t" style="left:1213.0px;top:272.5px;line-height:19px;font-size:14.31px;color:#c2c5ce;transform:scaleX(1.331);"><span style="font-size:88%;letter-spacing:1.35px">글꼴</span>/<span style="font-size:88%;letter-spacing:1.35px">문자유형 교체</span>: XCV</div>
<div class="t" style="left:1213.0px;top:322.5px;line-height:19px;font-size:14.31px;color:#c2c5ce;transform:scaleX(1.324);"><span style="font-size:88%;letter-spacing:1.35px">도면의 문자열 </span>Excel/<span style="font-size:88%;letter-spacing:1.35px">메모장에 붙여넣기</span>: Ctrl+T</div>
<div class="t" style="left:1213.0px;top:367.5px;line-height:19px;font-size:14.31px;color:#c2c5ce;transform:scaleX(1.327);">Excel /<span style="font-size:88%;letter-spacing:1.35px">메모장의 문자열 도면에 붙여넣기</span>: Ctrl+R</div>
<div class="t" style="left:1213.0px;top:417.0px;line-height:19px;font-size:14.31px;color:#c2c5ce;transform:scaleX(1.087);">TEXT LINE: TEXTLINE</div>
<div class="t" style="left:1213.0px;top:462.5px;line-height:19px;font-size:14.31px;color:#c2c5ce;transform:scaleX(1.181);">TEXT BOX <span style="font-size:88%;letter-spacing:1.35px">그리기</span>: TBOX</div>
<div class="t" style="left:1213.0px;top:507.0px;line-height:19px;font-size:14.31px;color:#c2c5ce;transform:scaleX(1.316);"><span style="font-size:88%;letter-spacing:1.35px">다각형</span>/<span style="font-size:88%;letter-spacing:1.35px">원의 중심에 문자 정렬</span>: XPCJ</div>
<div class="t" style="left:1213.0px;top:557.0px;line-height:19px;font-size:14.31px;color:#c2c5ce;transform:scaleX(1.260);"><span style="font-size:88%;letter-spacing:1.35px">문자 대응 복사</span>: XTEC</div>
<div class="t" style="left:1213.0px;top:601.5px;line-height:19px;font-size:14.31px;color:#c2c5ce;transform:scaleX(1.294);"><span style="font-size:88%;letter-spacing:1.35px">문자 내용 서로 바꾸기</span>: XTSW</div>
<div class="t" style="left:1213.0px;top:651.5px;line-height:19px;font-size:14.31px;color:#c2c5ce;transform:scaleX(1.251);">TAP <span style="font-size:88%;letter-spacing:1.35px">치수 쓰기</span>: XTAPLD</div>
<div class="t" style="left:1213.0px;top:695.8px;line-height:19px;font-size:14.31px;color:#c2c5ce;transform:scaleX(1.255);"><span style="font-size:88%;letter-spacing:1.35px">블록명 쓰기</span>: XBLKLD</div>
<svg class="b" style="left:1154px;top:168px" width="450" height="560" viewBox="1154 168 450 560"><path d="M1166 180 Q1177 177 1185.5 183 Q1194 177 1205.5 180 V203 Q1194 200.5 1185.5 206 Q1177 200.5 1166 203 Z" fill="#fbfbff" stroke="#2828c8" stroke-width="2.2" /><path d="M1164.5 182.5 V206 Q1177 203.5 1185.5 208 Q1194 203.5 1207 206 V182.5" fill="none" stroke="#2020a8" stroke-width="1.3" /><path d="M1176 187.5 h19 M1185.5 187.5 v11" fill="none" stroke="#1818e8" stroke-width="2.6" /><text x="1162" y="235" font-family="'Liberation Serif','Noto Serif CJK SC',serif" font-size="17" font-weight="bold" fill="#050505" stroke="#f4f4f4" stroke-width="2.2" paint-order="stroke" textLength="43.5" lengthAdjust="spacingAndGlyphs">Font</text><path d="M1186.5 238.5 h17 M1186.5 253.5 h17 M1184 242 v8 M1206.5 242 v8" fill="none" stroke="#f4f4f4" stroke-width="1.6" /><rect x="1188.5" y="242" width="13" height="8" fill="none" stroke="#f4f4f4" stroke-width="1.6"/><text x="1161" y="288" font-family="'Liberation Serif','Noto Serif CJK SC',serif" font-size="29" font-weight="normal" fill="#5ea4de" textLength="28" lengthAdjust="spacingAndGlyphs">A</text><text x="1189" y="294" font-family="'Liberation Sans','Noto Sans CJK KR',sans-serif" font-size="21" font-weight="bold" fill="#14e414" textLength="17" lengthAdjust="spacingAndGlyphs">a</text><rect x="1161" y="315" width="43" height="22" fill="#f8f8fa" stroke="#f01414" stroke-width="2.4"/><rect x="1205.5" y="315" width="1.6" height="24" fill="#b8b8c0" /><text x="1172" y="344.5" font-family="'Liberation Serif','Noto Serif CJK SC',serif" font-size="33" font-weight="bold" fill="#050505" stroke="#e8e8ec" stroke-width="1.2" paint-order="stroke" textLength="31" lengthAdjust="spacingAndGlyphs">A</text><rect x="1161" y="361.5" width="45" height="33" fill="#f0e8ea" stroke="#d02038" stroke-width="1.6"/><rect x="1164.5" y="365.0" width="3.2" height="2" fill="#e02840" /><rect x="1170.1" y="365.0" width="3.2" height="2" fill="#e02840" /><rect x="1175.7" y="365.0" width="3.2" height="2" fill="#e02840" /><rect x="1181.3" y="365.0" width="3.2" height="2" fill="#e02840" /><rect x="1186.9" y="365.0" width="3.2" height="2" fill="#e02840" /><rect x="1192.5" y="365.0" width="3.2" height="2" fill="#e02840" /><rect x="1198.1" y="365.0" width="3.2" height="2" fill="#e02840" /><rect x="1164.5" y="369.8" width="3.2" height="2" fill="#e02840" /><rect x="1170.1" y="369.8" width="3.2" height="2" fill="#e02840" /><rect x="1175.7" y="369.8" width="3.2" height="2" fill="#e02840" /><rect x="1181.3" y="369.8" width="3.2" height="2" fill="#e02840" /><rect x="1186.9" y="369.8" width="3.2" height="2" fill="#e02840" /><rect x="1192.5" y="369.8" width="3.2" height="2" fill="#e02840" /><rect x="1198.1" y="369.8" width="3.2" height="2" fill="#e02840" /><rect x="1186.9" y="374.6" width="3.2" height="2" fill="#e02840" /><rect x="1192.5" y="374.6" width="3.2" height="2" fill="#e02840" /><rect x="1198.1" y="374.6" width="3.2" height="2" fill="#e02840" /><rect x="1186.9" y="379.4" width="3.2" height="2" fill="#e02840" /><rect x="1192.5" y="379.4" width="3.2" height="2" fill="#e02840" /><rect x="1198.1" y="379.4" width="3.2" height="2" fill="#e02840" /><rect x="1186.9" y="384.2" width="3.2" height="2" fill="#e02840" /><rect x="1192.5" y="384.2" width="3.2" height="2" fill="#e02840" /><rect x="1198.1" y="384.2" width="3.2" height="2" fill="#e02840" /><rect x="1186.9" y="389.0" width="3.2" height="2" fill="#e02840" /><rect x="1192.5" y="389.0" width="3.2" height="2" fill="#e02840" /><rect x="1198.1" y="389.0" width="3.2" height="2" fill="#e02840" /><text x="1166" y="389.5" font-family="'Liberation Serif','Noto Serif CJK SC',serif" font-size="21" font-weight="bold" fill="#050505" textLength="21" lengthAdjust="spacingAndGlyphs">A</text><rect x="1162" y="411.8" width="9.5" height="4.4" fill="#f09a20" /><rect x="1173" y="411.8" width="9.5" height="4.4" fill="#f09a20" /><rect x="1184" y="411.8" width="12.0" height="4.4" fill="#f09a20" /><rect x="1162" y="418.3" width="7.5" height="4.4" fill="#f09a20" /><rect x="1171" y="418.3" width="9.5" height="4.4" fill="#f09a20" /><rect x="1182" y="418.3" width="9.5" height="4.4" fill="#f09a20" /><rect x="1193" y="418.3" width="11.0" height="4.4" fill="#f09a20" /><rect x="1162" y="424.8" width="7.5" height="4.4" fill="#f09a20" /><rect x="1171" y="424.8" width="9.5" height="4.4" fill="#f09a20" /><rect x="1182" y="424.8" width="8.0" height="4.4" fill="#f09a20" /><rect x="1162" y="431.8" width="11.5" height="4.4" fill="#f09a20" /><rect x="1175" y="431.8" width="11.5" height="4.4" fill="#f09a20" /><rect x="1188" y="431.8" width="11.0" height="4.4" fill="#f09a20" /><rect x="1162" y="438.3" width="7.5" height="4.4" fill="#f09a20" /><rect x="1171" y="438.3" width="9.5" height="4.4" fill="#f09a20" /><rect x="1182" y="438.3" width="10.0" height="4.4" fill="#f09a20" /><path d="M1161 470.5 l5 -5.5 h34 l5.5 5.5 l-5.5 5.5 h-34 z" fill="#b4aa98" stroke="#d8c8a8" stroke-width="1" /><text x="1170" y="474.5" font-family="'Liberation Sans','Noto Sans CJK KR',sans-serif" font-size="9.5" font-weight="bold" fill="#f4f4f4" textLength="26" lengthAdjust="spacingAndGlyphs">ABC</text><rect x="1161.5" y="500" width="42" height="30" fill="none" stroke="#f4f4f4" stroke-width="2.4" stroke-dasharray="2.2 2.6"/><path d="M1170 507.5 h11 q0 9 -10 13 M1188.5 503 v23 M1188.5 514 h6" fill="none" stroke="#18dcc8" stroke-width="2.6" /><rect x="1182.5" y="511.5" width="6.5" height="6" fill="#f01818" /><rect x="1184.5" y="513.5" width="2" height="2" fill="#f8f8f8" /><path d="M1164.5 549 v33 M1190.5 549 v33" fill="none" stroke="#f4f4f4" stroke-width="2.4" stroke-dasharray="2.2 2.4"/><path d="M1170 552 h9 q0 7 -8 10 M1184 550 v14 M1184 557 h4" fill="none" stroke="#18dcc8" stroke-width="2.2" /><path d="M1171.5 569 v10 h12 M1183.5 568 v13" fill="none" stroke="#e428e4" stroke-width="2.4" /><path d="M1195 558.5 h11 M1202.5 555.0 l4 3.5 l-4 3.5" fill="none" stroke="#f4f4f4" stroke-width="1.7" /><path d="M1195 573.5 h11 M1202.5 570.0 l4 3.5 l-4 3.5" fill="none" stroke="#f4f4f4" stroke-width="1.7" /><text x="1159" y="613" font-family="'Liberation Sans','Noto Sans CJK KR',sans-serif" font-size="30" font-weight="normal" fill="#2294e8" textLength="19" lengthAdjust="spacingAndGlyphs">a</text><text x="1193" y="625.5" font-family="'Liberation Sans','Noto Sans CJK KR',sans-serif" font-size="26" font-weight="normal" fill="#f01414" textLength="15" lengthAdjust="spacingAndGlyphs">b</text><path d="M1178 598.5 h16 M1188.5 593.5 l6 5 l-6 5" fill="none" stroke="#a8e4e4" stroke-width="2" /><path d="M1191 622.5 h-18 M1179 617.5 l-6 5 l6 5" fill="none" stroke="#a8e4e4" stroke-width="2" /><circle cx="1173.5" cy="653" r="12.5" fill="none" stroke="#d81c24" stroke-width="1.5" stroke-dasharray="4 2"/><path d="M1169 653 h9 M1173.5 649.5 v7" fill="none" stroke="#f01818" stroke-width="1.6" /><path d="M1179 663 l11 8.5 h17" fill="none" stroke="#2c7cc0" stroke-width="1.4" /><path d="M1178 662 l5 1 l-3 3 z" fill="#2890e0" /><text x="1192" y="670" font-family="'Liberation Sans','Noto Sans CJK KR',sans-serif" font-size="8.5" font-weight="bold" fill="#e82020" textLength="15" lengthAdjust="spacingAndGlyphs">3-1</text><rect x="1161" y="688.5" width="28" height="11.5" fill="#f40808" stroke="#f0e8e8" stroke-width="1.4"/><rect x="1168.5" y="694" width="26.5" height="11" fill="#10f010" stroke="#d8ecd8" stroke-width="1.4"/><path d="M1172 708 V720.5 H1207" fill="none" stroke="#f4f4f4" stroke-width="1.5" /><path d="M1167.5 710.5 l4.5 -4.5 l4.5 4.5 z" fill="#f4f4f4" /><text x="1176" y="719.5" font-family="'Liberation Serif','Noto Serif CJK SC',serif" font-size="9" font-weight="bold" fill="#e01c1c" textLength="31" lengthAdjust="spacingAndGlyphs">NAM</text><path d="M1213.5 243 v17 l4 -3.8 l3.2 6.6 l3 -1.5 l-3.2 -6.4 h5.8 z" fill="#fafafa" stroke="#50545c" stroke-width="0.8" /></svg>
</div>
</body></html>
